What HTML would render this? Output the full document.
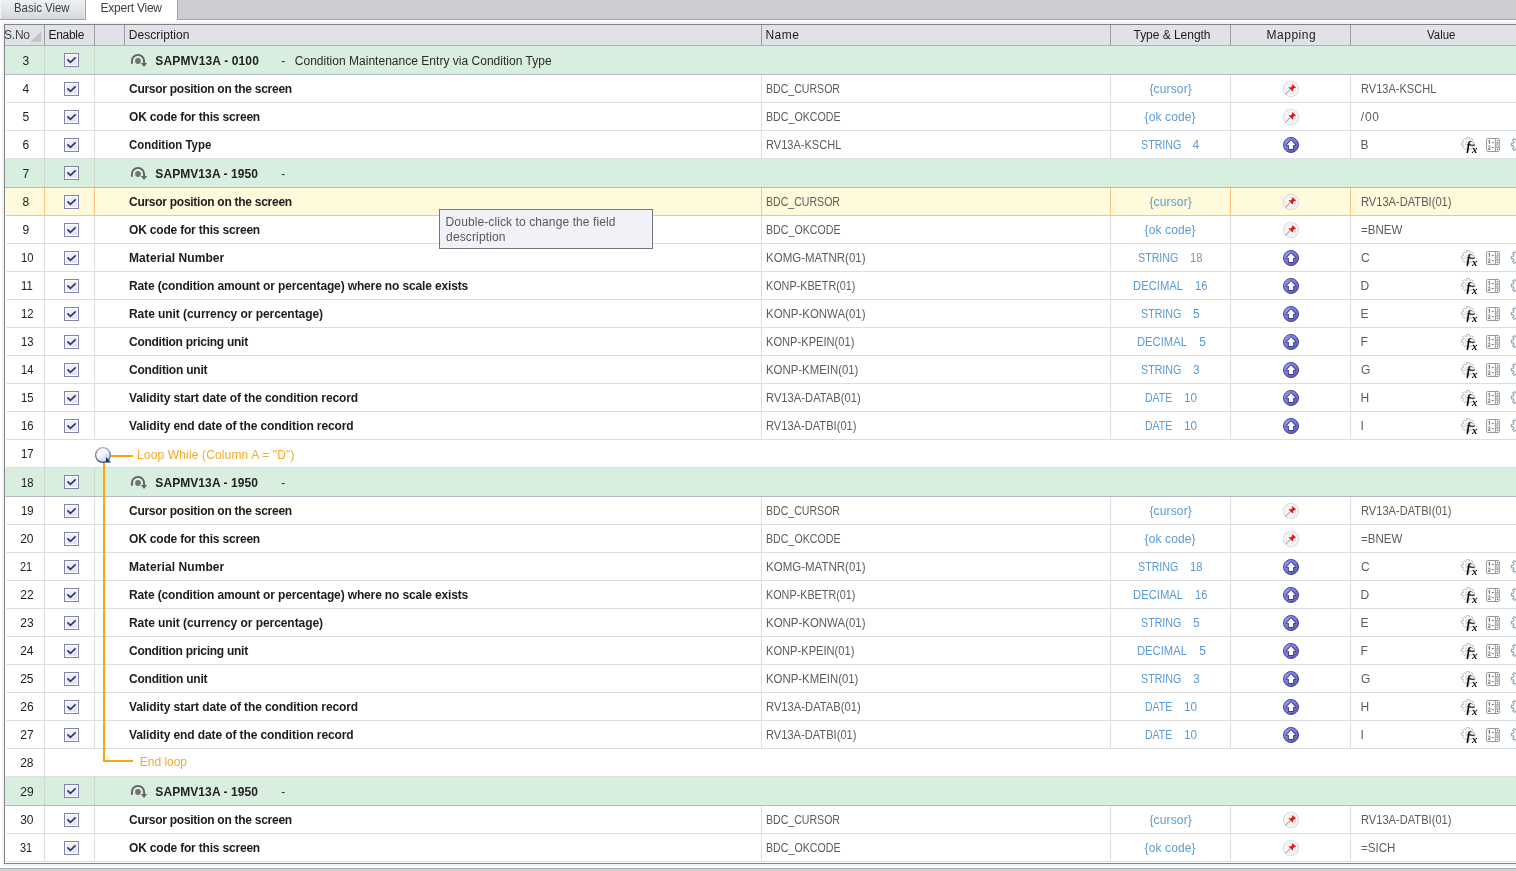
<!DOCTYPE html><html><head><meta charset="utf-8"><title>Expert View</title><style>
html,body{margin:0;padding:0}
body{width:1516px;height:871px;overflow:hidden;background:#fff;position:relative;font-family:"Liberation Sans",sans-serif;font-size:12px}
.a,.t,svg{position:absolute}
.t{white-space:pre;line-height:24px;height:24px;transform-origin:0 0}
.tab{color:#3b3f46}.hd{color:#1c1c1c}.sno{color:#444}.no{color:#222}.gb{color:#222;font-weight:bold}.gt{color:#2a2a2a}
.ds{color:#1c1c1c;font-weight:bold}.nm{color:#5c5c5c}.ty{color:#5b9bd5}.lp{color:#f6a828}.tt{color:#575757}

</style></head><body>
<div id="ly" class="a" style="left:0;top:0;width:1516px;height:871px;will-change:transform">
<svg width="0" height="0" style="left:0;top:0"><defs><linearGradient id="gcb" x1="0" y1="0" x2="1" y2="1"><stop offset="0" stop-color="#f3f4fa"/><stop offset="1" stop-color="#e0e4f2"/></linearGradient><linearGradient id="gup" x1="0.15" y1="0.1" x2="0.85" y2="0.9"><stop offset="0" stop-color="#9c9cf8"/><stop offset="0.55" stop-color="#7474c8"/><stop offset="1" stop-color="#6060b0"/></linearGradient><linearGradient id="glo" x1="0.2" y1="0.1" x2="0.8" y2="0.9"><stop offset="0" stop-color="#ffffff"/><stop offset="0.45" stop-color="#f2f6fd"/><stop offset="1" stop-color="#bccdee"/></linearGradient><linearGradient id="gls" x1="0" y1="0" x2="0" y2="1"><stop offset="0" stop-color="#a3add6"/><stop offset="1" stop-color="#34445f"/></linearGradient></defs></svg>
<div class="a" style="left:0px;top:0px;width:1516px;height:19px;background:#ccced4;"></div>
<div class="a" style="left:0px;top:19px;width:1516px;height:1px;background:#a1a5ab;"></div>
<div class="a" style="left:0px;top:0px;width:85px;height:19px;background:linear-gradient(#eef0f3,#e4e6ea 45%,#d4d7db);"></div>
<div class="a" style="left:0px;top:0px;width:1px;height:19px;background:#f4f5f7;"></div>
<div class="a" style="left:84px;top:0px;width:1px;height:19px;background:rgba(255,255,255,.35);"></div>
<div class="a" style="left:85px;top:0px;width:1px;height:20px;background:#9fa3a9;"></div>
<div class="a" style="left:86px;top:0px;width:91px;height:20px;background:#fff;"></div>
<div class="a" style="left:177px;top:0px;width:1px;height:20px;background:#9fa3a9;"></div>
<div class="a" style="left:2px;top:22px;width:1514px;height:2px;background:#f3f3f3;"></div>
<div class="a" style="left:2px;top:22px;width:2px;height:844px;background:#f3f3f3;"></div>
<div class="a" style="left:2px;top:864px;width:1514px;height:2px;background:#f3f3f3;"></div>
<div class="a" style="left:4px;top:24px;width:1512px;height:840px;background:#828282;"></div>
<div class="a" style="left:5px;top:25px;width:1511px;height:838px;background:#fff;"></div>
<div class="a" style="left:5px;top:25px;width:1511px;height:20px;background:#dfe2e7;"></div>
<div class="a" style="left:5px;top:45px;width:1511px;height:1px;background:#adb0b9;"></div>
<div class="a" style="left:44px;top:25px;width:1px;height:20px;background:#9a9da3;"></div>
<div class="a" style="left:94px;top:25px;width:1px;height:20px;background:#9a9da3;"></div>
<div class="a" style="left:124px;top:25px;width:1px;height:20px;background:#9a9da3;"></div>
<div class="a" style="left:761px;top:25px;width:1px;height:20px;background:#9a9da3;"></div>
<div class="a" style="left:1110px;top:25px;width:1px;height:20px;background:#9a9da3;"></div>
<div class="a" style="left:1230px;top:25px;width:1px;height:20px;background:#9a9da3;"></div>
<div class="a" style="left:1350px;top:25px;width:1px;height:20px;background:#9a9da3;"></div>
<svg style="left:30px;top:31px" width="12" height="11"><path d="M11.2 0.2V10.8H0.4Z" fill="#bfc3c7"/></svg>
<div class="a" style="left:0px;top:868px;width:1516px;height:1px;background:#a9aeb9;"></div>
<div class="a" style="left:0px;top:869px;width:1516px;height:2px;background:#cdd0d5;"></div>
<div class="a" style="left:5px;top:46px;width:1511px;height:28px;background:#d8efdf;"></div>
<div class="a" style="left:5px;top:74px;width:1511px;height:1px;background:#b3bac6;"></div>
<div class="a" style="left:44px;top:46px;width:1px;height:28px;background:#ccd6d3;"></div>
<div class="a" style="left:94px;top:46px;width:1px;height:28px;background:#ccd6d3;"></div>
<svg style="left:64px;top:53px" width="15" height="14"><rect x=".5" y=".5" width="14" height="13" fill="#fff" stroke="#8383a9"/><rect x="2" y="2" width="11" height="10" fill="url(#gcb)"/><path d="M3.9 6.8L6.4 9.4L11.1 4.8" fill="none" stroke="#34336a" stroke-width="1.7" stroke-linecap="round"/></svg>
<svg style="left:130px;top:52px" width="18" height="16"><path d="M1.9 11.8V9A6.1 6.1 0 0 1 14.1 9V11.4" fill="none" stroke="#5f5f61" stroke-width="1.9"/><path d="M10.8 11H17.2L14 14.9Z" fill="#666668"/><circle cx="8" cy="9" r="2.9" fill="#727274"/></svg>
<div class="a" style="left:6px;top:102px;width:1510px;height:1px;background:#dcdee1;"></div>
<div class="a" style="left:44px;top:75px;width:1px;height:28px;background:#dcdee1;"></div>
<div class="a" style="left:94px;top:75px;width:1px;height:28px;background:#dcdee1;"></div>
<div class="a" style="left:761px;top:75px;width:1px;height:28px;background:#dcdee1;"></div>
<div class="a" style="left:1110px;top:75px;width:1px;height:28px;background:#dcdee1;"></div>
<div class="a" style="left:1230px;top:75px;width:1px;height:28px;background:#dcdee1;"></div>
<div class="a" style="left:1350px;top:75px;width:1px;height:28px;background:#dcdee1;"></div>
<svg style="left:64px;top:82px" width="15" height="14"><rect x=".5" y=".5" width="14" height="13" fill="#fff" stroke="#8383a9"/><rect x="2" y="2" width="11" height="10" fill="url(#gcb)"/><path d="M3.9 6.8L6.4 9.4L11.1 4.8" fill="none" stroke="#34336a" stroke-width="1.7" stroke-linecap="round"/></svg>
<div class="a" style="left:6px;top:130px;width:1510px;height:1px;background:#dcdee1;"></div>
<div class="a" style="left:44px;top:103px;width:1px;height:28px;background:#dcdee1;"></div>
<div class="a" style="left:94px;top:103px;width:1px;height:28px;background:#dcdee1;"></div>
<div class="a" style="left:761px;top:103px;width:1px;height:28px;background:#dcdee1;"></div>
<div class="a" style="left:1110px;top:103px;width:1px;height:28px;background:#dcdee1;"></div>
<div class="a" style="left:1230px;top:103px;width:1px;height:28px;background:#dcdee1;"></div>
<div class="a" style="left:1350px;top:103px;width:1px;height:28px;background:#dcdee1;"></div>
<svg style="left:64px;top:110px" width="15" height="14"><rect x=".5" y=".5" width="14" height="13" fill="#fff" stroke="#8383a9"/><rect x="2" y="2" width="11" height="10" fill="url(#gcb)"/><path d="M3.9 6.8L6.4 9.4L11.1 4.8" fill="none" stroke="#34336a" stroke-width="1.7" stroke-linecap="round"/></svg>
<div class="a" style="left:6px;top:158px;width:1510px;height:1px;background:#dcdee1;"></div>
<div class="a" style="left:44px;top:131px;width:1px;height:28px;background:#dcdee1;"></div>
<div class="a" style="left:94px;top:131px;width:1px;height:28px;background:#dcdee1;"></div>
<div class="a" style="left:761px;top:131px;width:1px;height:28px;background:#dcdee1;"></div>
<div class="a" style="left:1110px;top:131px;width:1px;height:28px;background:#dcdee1;"></div>
<div class="a" style="left:1230px;top:131px;width:1px;height:28px;background:#dcdee1;"></div>
<div class="a" style="left:1350px;top:131px;width:1px;height:28px;background:#dcdee1;"></div>
<svg style="left:64px;top:138px" width="15" height="14"><rect x=".5" y=".5" width="14" height="13" fill="#fff" stroke="#8383a9"/><rect x="2" y="2" width="11" height="10" fill="url(#gcb)"/><path d="M3.9 6.8L6.4 9.4L11.1 4.8" fill="none" stroke="#34336a" stroke-width="1.7" stroke-linecap="round"/></svg>
<div class="a" style="left:5px;top:159px;width:1511px;height:28px;background:#d8efdf;"></div>
<div class="a" style="left:5px;top:187px;width:1511px;height:1px;background:#b3bac6;"></div>
<div class="a" style="left:44px;top:159px;width:1px;height:28px;background:#ccd6d3;"></div>
<div class="a" style="left:94px;top:159px;width:1px;height:28px;background:#ccd6d3;"></div>
<svg style="left:64px;top:166px" width="15" height="14"><rect x=".5" y=".5" width="14" height="13" fill="#fff" stroke="#8383a9"/><rect x="2" y="2" width="11" height="10" fill="url(#gcb)"/><path d="M3.9 6.8L6.4 9.4L11.1 4.8" fill="none" stroke="#34336a" stroke-width="1.7" stroke-linecap="round"/></svg>
<svg style="left:130px;top:165px" width="18" height="16"><path d="M1.9 11.8V9A6.1 6.1 0 0 1 14.1 9V11.4" fill="none" stroke="#5f5f61" stroke-width="1.9"/><path d="M10.8 11H17.2L14 14.9Z" fill="#666668"/><circle cx="8" cy="9" r="2.9" fill="#727274"/></svg>
<div class="a" style="left:5px;top:188px;width:1511px;height:27px;background:#fffadb;"></div>
<div class="a" style="left:6px;top:215px;width:1510px;height:1px;background:#f6c47e;"></div>
<div class="a" style="left:44px;top:188px;width:1px;height:28px;background:#f6c47e;"></div>
<div class="a" style="left:94px;top:188px;width:1px;height:28px;background:#f6c47e;"></div>
<div class="a" style="left:761px;top:188px;width:1px;height:28px;background:#f6c47e;"></div>
<div class="a" style="left:1110px;top:188px;width:1px;height:28px;background:#f6c47e;"></div>
<div class="a" style="left:1230px;top:188px;width:1px;height:28px;background:#f6c47e;"></div>
<div class="a" style="left:1350px;top:188px;width:1px;height:28px;background:#f6c47e;"></div>
<svg style="left:64px;top:195px" width="15" height="14"><rect x=".5" y=".5" width="14" height="13" fill="#fff" stroke="#8383a9"/><rect x="2" y="2" width="11" height="10" fill="url(#gcb)"/><path d="M3.9 6.8L6.4 9.4L11.1 4.8" fill="none" stroke="#34336a" stroke-width="1.7" stroke-linecap="round"/></svg>
<div class="a" style="left:6px;top:243px;width:1510px;height:1px;background:#dcdee1;"></div>
<div class="a" style="left:44px;top:216px;width:1px;height:28px;background:#dcdee1;"></div>
<div class="a" style="left:94px;top:216px;width:1px;height:28px;background:#dcdee1;"></div>
<div class="a" style="left:761px;top:216px;width:1px;height:28px;background:#dcdee1;"></div>
<div class="a" style="left:1110px;top:216px;width:1px;height:28px;background:#dcdee1;"></div>
<div class="a" style="left:1230px;top:216px;width:1px;height:28px;background:#dcdee1;"></div>
<div class="a" style="left:1350px;top:216px;width:1px;height:28px;background:#dcdee1;"></div>
<svg style="left:64px;top:223px" width="15" height="14"><rect x=".5" y=".5" width="14" height="13" fill="#fff" stroke="#8383a9"/><rect x="2" y="2" width="11" height="10" fill="url(#gcb)"/><path d="M3.9 6.8L6.4 9.4L11.1 4.8" fill="none" stroke="#34336a" stroke-width="1.7" stroke-linecap="round"/></svg>
<div class="a" style="left:6px;top:271px;width:1510px;height:1px;background:#dcdee1;"></div>
<div class="a" style="left:44px;top:244px;width:1px;height:28px;background:#dcdee1;"></div>
<div class="a" style="left:94px;top:244px;width:1px;height:28px;background:#dcdee1;"></div>
<div class="a" style="left:761px;top:244px;width:1px;height:28px;background:#dcdee1;"></div>
<div class="a" style="left:1110px;top:244px;width:1px;height:28px;background:#dcdee1;"></div>
<div class="a" style="left:1230px;top:244px;width:1px;height:28px;background:#dcdee1;"></div>
<div class="a" style="left:1350px;top:244px;width:1px;height:28px;background:#dcdee1;"></div>
<svg style="left:64px;top:251px" width="15" height="14"><rect x=".5" y=".5" width="14" height="13" fill="#fff" stroke="#8383a9"/><rect x="2" y="2" width="11" height="10" fill="url(#gcb)"/><path d="M3.9 6.8L6.4 9.4L11.1 4.8" fill="none" stroke="#34336a" stroke-width="1.7" stroke-linecap="round"/></svg>
<div class="a" style="left:6px;top:299px;width:1510px;height:1px;background:#dcdee1;"></div>
<div class="a" style="left:44px;top:272px;width:1px;height:28px;background:#dcdee1;"></div>
<div class="a" style="left:94px;top:272px;width:1px;height:28px;background:#dcdee1;"></div>
<div class="a" style="left:761px;top:272px;width:1px;height:28px;background:#dcdee1;"></div>
<div class="a" style="left:1110px;top:272px;width:1px;height:28px;background:#dcdee1;"></div>
<div class="a" style="left:1230px;top:272px;width:1px;height:28px;background:#dcdee1;"></div>
<div class="a" style="left:1350px;top:272px;width:1px;height:28px;background:#dcdee1;"></div>
<svg style="left:64px;top:279px" width="15" height="14"><rect x=".5" y=".5" width="14" height="13" fill="#fff" stroke="#8383a9"/><rect x="2" y="2" width="11" height="10" fill="url(#gcb)"/><path d="M3.9 6.8L6.4 9.4L11.1 4.8" fill="none" stroke="#34336a" stroke-width="1.7" stroke-linecap="round"/></svg>
<div class="a" style="left:6px;top:327px;width:1510px;height:1px;background:#dcdee1;"></div>
<div class="a" style="left:44px;top:300px;width:1px;height:28px;background:#dcdee1;"></div>
<div class="a" style="left:94px;top:300px;width:1px;height:28px;background:#dcdee1;"></div>
<div class="a" style="left:761px;top:300px;width:1px;height:28px;background:#dcdee1;"></div>
<div class="a" style="left:1110px;top:300px;width:1px;height:28px;background:#dcdee1;"></div>
<div class="a" style="left:1230px;top:300px;width:1px;height:28px;background:#dcdee1;"></div>
<div class="a" style="left:1350px;top:300px;width:1px;height:28px;background:#dcdee1;"></div>
<svg style="left:64px;top:307px" width="15" height="14"><rect x=".5" y=".5" width="14" height="13" fill="#fff" stroke="#8383a9"/><rect x="2" y="2" width="11" height="10" fill="url(#gcb)"/><path d="M3.9 6.8L6.4 9.4L11.1 4.8" fill="none" stroke="#34336a" stroke-width="1.7" stroke-linecap="round"/></svg>
<div class="a" style="left:6px;top:355px;width:1510px;height:1px;background:#dcdee1;"></div>
<div class="a" style="left:44px;top:328px;width:1px;height:28px;background:#dcdee1;"></div>
<div class="a" style="left:94px;top:328px;width:1px;height:28px;background:#dcdee1;"></div>
<div class="a" style="left:761px;top:328px;width:1px;height:28px;background:#dcdee1;"></div>
<div class="a" style="left:1110px;top:328px;width:1px;height:28px;background:#dcdee1;"></div>
<div class="a" style="left:1230px;top:328px;width:1px;height:28px;background:#dcdee1;"></div>
<div class="a" style="left:1350px;top:328px;width:1px;height:28px;background:#dcdee1;"></div>
<svg style="left:64px;top:335px" width="15" height="14"><rect x=".5" y=".5" width="14" height="13" fill="#fff" stroke="#8383a9"/><rect x="2" y="2" width="11" height="10" fill="url(#gcb)"/><path d="M3.9 6.8L6.4 9.4L11.1 4.8" fill="none" stroke="#34336a" stroke-width="1.7" stroke-linecap="round"/></svg>
<div class="a" style="left:6px;top:383px;width:1510px;height:1px;background:#dcdee1;"></div>
<div class="a" style="left:44px;top:356px;width:1px;height:28px;background:#dcdee1;"></div>
<div class="a" style="left:94px;top:356px;width:1px;height:28px;background:#dcdee1;"></div>
<div class="a" style="left:761px;top:356px;width:1px;height:28px;background:#dcdee1;"></div>
<div class="a" style="left:1110px;top:356px;width:1px;height:28px;background:#dcdee1;"></div>
<div class="a" style="left:1230px;top:356px;width:1px;height:28px;background:#dcdee1;"></div>
<div class="a" style="left:1350px;top:356px;width:1px;height:28px;background:#dcdee1;"></div>
<svg style="left:64px;top:363px" width="15" height="14"><rect x=".5" y=".5" width="14" height="13" fill="#fff" stroke="#8383a9"/><rect x="2" y="2" width="11" height="10" fill="url(#gcb)"/><path d="M3.9 6.8L6.4 9.4L11.1 4.8" fill="none" stroke="#34336a" stroke-width="1.7" stroke-linecap="round"/></svg>
<div class="a" style="left:6px;top:411px;width:1510px;height:1px;background:#dcdee1;"></div>
<div class="a" style="left:44px;top:384px;width:1px;height:28px;background:#dcdee1;"></div>
<div class="a" style="left:94px;top:384px;width:1px;height:28px;background:#dcdee1;"></div>
<div class="a" style="left:761px;top:384px;width:1px;height:28px;background:#dcdee1;"></div>
<div class="a" style="left:1110px;top:384px;width:1px;height:28px;background:#dcdee1;"></div>
<div class="a" style="left:1230px;top:384px;width:1px;height:28px;background:#dcdee1;"></div>
<div class="a" style="left:1350px;top:384px;width:1px;height:28px;background:#dcdee1;"></div>
<svg style="left:64px;top:391px" width="15" height="14"><rect x=".5" y=".5" width="14" height="13" fill="#fff" stroke="#8383a9"/><rect x="2" y="2" width="11" height="10" fill="url(#gcb)"/><path d="M3.9 6.8L6.4 9.4L11.1 4.8" fill="none" stroke="#34336a" stroke-width="1.7" stroke-linecap="round"/></svg>
<div class="a" style="left:6px;top:439px;width:1510px;height:1px;background:#dcdee1;"></div>
<div class="a" style="left:44px;top:412px;width:1px;height:28px;background:#dcdee1;"></div>
<div class="a" style="left:94px;top:412px;width:1px;height:28px;background:#dcdee1;"></div>
<div class="a" style="left:761px;top:412px;width:1px;height:28px;background:#dcdee1;"></div>
<div class="a" style="left:1110px;top:412px;width:1px;height:28px;background:#dcdee1;"></div>
<div class="a" style="left:1230px;top:412px;width:1px;height:28px;background:#dcdee1;"></div>
<div class="a" style="left:1350px;top:412px;width:1px;height:28px;background:#dcdee1;"></div>
<svg style="left:64px;top:419px" width="15" height="14"><rect x=".5" y=".5" width="14" height="13" fill="#fff" stroke="#8383a9"/><rect x="2" y="2" width="11" height="10" fill="url(#gcb)"/><path d="M3.9 6.8L6.4 9.4L11.1 4.8" fill="none" stroke="#34336a" stroke-width="1.7" stroke-linecap="round"/></svg>
<div class="a" style="left:6px;top:467px;width:1510px;height:1px;background:#dcdee1;"></div>
<div class="a" style="left:44px;top:440px;width:1px;height:28px;background:#dcdee1;"></div>
<div class="a" style="left:5px;top:468px;width:1511px;height:28px;background:#d8efdf;"></div>
<div class="a" style="left:5px;top:496px;width:1511px;height:1px;background:#b3bac6;"></div>
<div class="a" style="left:44px;top:468px;width:1px;height:28px;background:#ccd6d3;"></div>
<div class="a" style="left:94px;top:468px;width:1px;height:28px;background:#ccd6d3;"></div>
<svg style="left:64px;top:475px" width="15" height="14"><rect x=".5" y=".5" width="14" height="13" fill="#fff" stroke="#8383a9"/><rect x="2" y="2" width="11" height="10" fill="url(#gcb)"/><path d="M3.9 6.8L6.4 9.4L11.1 4.8" fill="none" stroke="#34336a" stroke-width="1.7" stroke-linecap="round"/></svg>
<svg style="left:130px;top:474px" width="18" height="16"><path d="M1.9 11.8V9A6.1 6.1 0 0 1 14.1 9V11.4" fill="none" stroke="#5f5f61" stroke-width="1.9"/><path d="M10.8 11H17.2L14 14.9Z" fill="#666668"/><circle cx="8" cy="9" r="2.9" fill="#727274"/></svg>
<div class="a" style="left:6px;top:524px;width:1510px;height:1px;background:#dcdee1;"></div>
<div class="a" style="left:44px;top:497px;width:1px;height:28px;background:#dcdee1;"></div>
<div class="a" style="left:94px;top:497px;width:1px;height:28px;background:#dcdee1;"></div>
<div class="a" style="left:761px;top:497px;width:1px;height:28px;background:#dcdee1;"></div>
<div class="a" style="left:1110px;top:497px;width:1px;height:28px;background:#dcdee1;"></div>
<div class="a" style="left:1230px;top:497px;width:1px;height:28px;background:#dcdee1;"></div>
<div class="a" style="left:1350px;top:497px;width:1px;height:28px;background:#dcdee1;"></div>
<svg style="left:64px;top:504px" width="15" height="14"><rect x=".5" y=".5" width="14" height="13" fill="#fff" stroke="#8383a9"/><rect x="2" y="2" width="11" height="10" fill="url(#gcb)"/><path d="M3.9 6.8L6.4 9.4L11.1 4.8" fill="none" stroke="#34336a" stroke-width="1.7" stroke-linecap="round"/></svg>
<div class="a" style="left:6px;top:552px;width:1510px;height:1px;background:#dcdee1;"></div>
<div class="a" style="left:44px;top:525px;width:1px;height:28px;background:#dcdee1;"></div>
<div class="a" style="left:94px;top:525px;width:1px;height:28px;background:#dcdee1;"></div>
<div class="a" style="left:761px;top:525px;width:1px;height:28px;background:#dcdee1;"></div>
<div class="a" style="left:1110px;top:525px;width:1px;height:28px;background:#dcdee1;"></div>
<div class="a" style="left:1230px;top:525px;width:1px;height:28px;background:#dcdee1;"></div>
<div class="a" style="left:1350px;top:525px;width:1px;height:28px;background:#dcdee1;"></div>
<svg style="left:64px;top:532px" width="15" height="14"><rect x=".5" y=".5" width="14" height="13" fill="#fff" stroke="#8383a9"/><rect x="2" y="2" width="11" height="10" fill="url(#gcb)"/><path d="M3.9 6.8L6.4 9.4L11.1 4.8" fill="none" stroke="#34336a" stroke-width="1.7" stroke-linecap="round"/></svg>
<div class="a" style="left:6px;top:580px;width:1510px;height:1px;background:#dcdee1;"></div>
<div class="a" style="left:44px;top:553px;width:1px;height:28px;background:#dcdee1;"></div>
<div class="a" style="left:94px;top:553px;width:1px;height:28px;background:#dcdee1;"></div>
<div class="a" style="left:761px;top:553px;width:1px;height:28px;background:#dcdee1;"></div>
<div class="a" style="left:1110px;top:553px;width:1px;height:28px;background:#dcdee1;"></div>
<div class="a" style="left:1230px;top:553px;width:1px;height:28px;background:#dcdee1;"></div>
<div class="a" style="left:1350px;top:553px;width:1px;height:28px;background:#dcdee1;"></div>
<svg style="left:64px;top:560px" width="15" height="14"><rect x=".5" y=".5" width="14" height="13" fill="#fff" stroke="#8383a9"/><rect x="2" y="2" width="11" height="10" fill="url(#gcb)"/><path d="M3.9 6.8L6.4 9.4L11.1 4.8" fill="none" stroke="#34336a" stroke-width="1.7" stroke-linecap="round"/></svg>
<div class="a" style="left:6px;top:608px;width:1510px;height:1px;background:#dcdee1;"></div>
<div class="a" style="left:44px;top:581px;width:1px;height:28px;background:#dcdee1;"></div>
<div class="a" style="left:94px;top:581px;width:1px;height:28px;background:#dcdee1;"></div>
<div class="a" style="left:761px;top:581px;width:1px;height:28px;background:#dcdee1;"></div>
<div class="a" style="left:1110px;top:581px;width:1px;height:28px;background:#dcdee1;"></div>
<div class="a" style="left:1230px;top:581px;width:1px;height:28px;background:#dcdee1;"></div>
<div class="a" style="left:1350px;top:581px;width:1px;height:28px;background:#dcdee1;"></div>
<svg style="left:64px;top:588px" width="15" height="14"><rect x=".5" y=".5" width="14" height="13" fill="#fff" stroke="#8383a9"/><rect x="2" y="2" width="11" height="10" fill="url(#gcb)"/><path d="M3.9 6.8L6.4 9.4L11.1 4.8" fill="none" stroke="#34336a" stroke-width="1.7" stroke-linecap="round"/></svg>
<div class="a" style="left:6px;top:636px;width:1510px;height:1px;background:#dcdee1;"></div>
<div class="a" style="left:44px;top:609px;width:1px;height:28px;background:#dcdee1;"></div>
<div class="a" style="left:94px;top:609px;width:1px;height:28px;background:#dcdee1;"></div>
<div class="a" style="left:761px;top:609px;width:1px;height:28px;background:#dcdee1;"></div>
<div class="a" style="left:1110px;top:609px;width:1px;height:28px;background:#dcdee1;"></div>
<div class="a" style="left:1230px;top:609px;width:1px;height:28px;background:#dcdee1;"></div>
<div class="a" style="left:1350px;top:609px;width:1px;height:28px;background:#dcdee1;"></div>
<svg style="left:64px;top:616px" width="15" height="14"><rect x=".5" y=".5" width="14" height="13" fill="#fff" stroke="#8383a9"/><rect x="2" y="2" width="11" height="10" fill="url(#gcb)"/><path d="M3.9 6.8L6.4 9.4L11.1 4.8" fill="none" stroke="#34336a" stroke-width="1.7" stroke-linecap="round"/></svg>
<div class="a" style="left:6px;top:664px;width:1510px;height:1px;background:#dcdee1;"></div>
<div class="a" style="left:44px;top:637px;width:1px;height:28px;background:#dcdee1;"></div>
<div class="a" style="left:94px;top:637px;width:1px;height:28px;background:#dcdee1;"></div>
<div class="a" style="left:761px;top:637px;width:1px;height:28px;background:#dcdee1;"></div>
<div class="a" style="left:1110px;top:637px;width:1px;height:28px;background:#dcdee1;"></div>
<div class="a" style="left:1230px;top:637px;width:1px;height:28px;background:#dcdee1;"></div>
<div class="a" style="left:1350px;top:637px;width:1px;height:28px;background:#dcdee1;"></div>
<svg style="left:64px;top:644px" width="15" height="14"><rect x=".5" y=".5" width="14" height="13" fill="#fff" stroke="#8383a9"/><rect x="2" y="2" width="11" height="10" fill="url(#gcb)"/><path d="M3.9 6.8L6.4 9.4L11.1 4.8" fill="none" stroke="#34336a" stroke-width="1.7" stroke-linecap="round"/></svg>
<div class="a" style="left:6px;top:692px;width:1510px;height:1px;background:#dcdee1;"></div>
<div class="a" style="left:44px;top:665px;width:1px;height:28px;background:#dcdee1;"></div>
<div class="a" style="left:94px;top:665px;width:1px;height:28px;background:#dcdee1;"></div>
<div class="a" style="left:761px;top:665px;width:1px;height:28px;background:#dcdee1;"></div>
<div class="a" style="left:1110px;top:665px;width:1px;height:28px;background:#dcdee1;"></div>
<div class="a" style="left:1230px;top:665px;width:1px;height:28px;background:#dcdee1;"></div>
<div class="a" style="left:1350px;top:665px;width:1px;height:28px;background:#dcdee1;"></div>
<svg style="left:64px;top:672px" width="15" height="14"><rect x=".5" y=".5" width="14" height="13" fill="#fff" stroke="#8383a9"/><rect x="2" y="2" width="11" height="10" fill="url(#gcb)"/><path d="M3.9 6.8L6.4 9.4L11.1 4.8" fill="none" stroke="#34336a" stroke-width="1.7" stroke-linecap="round"/></svg>
<div class="a" style="left:6px;top:720px;width:1510px;height:1px;background:#dcdee1;"></div>
<div class="a" style="left:44px;top:693px;width:1px;height:28px;background:#dcdee1;"></div>
<div class="a" style="left:94px;top:693px;width:1px;height:28px;background:#dcdee1;"></div>
<div class="a" style="left:761px;top:693px;width:1px;height:28px;background:#dcdee1;"></div>
<div class="a" style="left:1110px;top:693px;width:1px;height:28px;background:#dcdee1;"></div>
<div class="a" style="left:1230px;top:693px;width:1px;height:28px;background:#dcdee1;"></div>
<div class="a" style="left:1350px;top:693px;width:1px;height:28px;background:#dcdee1;"></div>
<svg style="left:64px;top:700px" width="15" height="14"><rect x=".5" y=".5" width="14" height="13" fill="#fff" stroke="#8383a9"/><rect x="2" y="2" width="11" height="10" fill="url(#gcb)"/><path d="M3.9 6.8L6.4 9.4L11.1 4.8" fill="none" stroke="#34336a" stroke-width="1.7" stroke-linecap="round"/></svg>
<div class="a" style="left:6px;top:748px;width:1510px;height:1px;background:#dcdee1;"></div>
<div class="a" style="left:44px;top:721px;width:1px;height:28px;background:#dcdee1;"></div>
<div class="a" style="left:94px;top:721px;width:1px;height:28px;background:#dcdee1;"></div>
<div class="a" style="left:761px;top:721px;width:1px;height:28px;background:#dcdee1;"></div>
<div class="a" style="left:1110px;top:721px;width:1px;height:28px;background:#dcdee1;"></div>
<div class="a" style="left:1230px;top:721px;width:1px;height:28px;background:#dcdee1;"></div>
<div class="a" style="left:1350px;top:721px;width:1px;height:28px;background:#dcdee1;"></div>
<svg style="left:64px;top:728px" width="15" height="14"><rect x=".5" y=".5" width="14" height="13" fill="#fff" stroke="#8383a9"/><rect x="2" y="2" width="11" height="10" fill="url(#gcb)"/><path d="M3.9 6.8L6.4 9.4L11.1 4.8" fill="none" stroke="#34336a" stroke-width="1.7" stroke-linecap="round"/></svg>
<div class="a" style="left:6px;top:776px;width:1510px;height:1px;background:#dcdee1;"></div>
<div class="a" style="left:44px;top:749px;width:1px;height:28px;background:#dcdee1;"></div>
<div class="a" style="left:5px;top:777px;width:1511px;height:28px;background:#d8efdf;"></div>
<div class="a" style="left:5px;top:805px;width:1511px;height:1px;background:#b3bac6;"></div>
<div class="a" style="left:44px;top:777px;width:1px;height:28px;background:#ccd6d3;"></div>
<div class="a" style="left:94px;top:777px;width:1px;height:28px;background:#ccd6d3;"></div>
<svg style="left:64px;top:784px" width="15" height="14"><rect x=".5" y=".5" width="14" height="13" fill="#fff" stroke="#8383a9"/><rect x="2" y="2" width="11" height="10" fill="url(#gcb)"/><path d="M3.9 6.8L6.4 9.4L11.1 4.8" fill="none" stroke="#34336a" stroke-width="1.7" stroke-linecap="round"/></svg>
<svg style="left:130px;top:783px" width="18" height="16"><path d="M1.9 11.8V9A6.1 6.1 0 0 1 14.1 9V11.4" fill="none" stroke="#5f5f61" stroke-width="1.9"/><path d="M10.8 11H17.2L14 14.9Z" fill="#666668"/><circle cx="8" cy="9" r="2.9" fill="#727274"/></svg>
<div class="a" style="left:6px;top:833px;width:1510px;height:1px;background:#dcdee1;"></div>
<div class="a" style="left:44px;top:806px;width:1px;height:28px;background:#dcdee1;"></div>
<div class="a" style="left:94px;top:806px;width:1px;height:28px;background:#dcdee1;"></div>
<div class="a" style="left:761px;top:806px;width:1px;height:28px;background:#dcdee1;"></div>
<div class="a" style="left:1110px;top:806px;width:1px;height:28px;background:#dcdee1;"></div>
<div class="a" style="left:1230px;top:806px;width:1px;height:28px;background:#dcdee1;"></div>
<div class="a" style="left:1350px;top:806px;width:1px;height:28px;background:#dcdee1;"></div>
<svg style="left:64px;top:813px" width="15" height="14"><rect x=".5" y=".5" width="14" height="13" fill="#fff" stroke="#8383a9"/><rect x="2" y="2" width="11" height="10" fill="url(#gcb)"/><path d="M3.9 6.8L6.4 9.4L11.1 4.8" fill="none" stroke="#34336a" stroke-width="1.7" stroke-linecap="round"/></svg>
<div class="a" style="left:6px;top:861px;width:1510px;height:1px;background:#dcdee1;"></div>
<div class="a" style="left:44px;top:834px;width:1px;height:28px;background:#dcdee1;"></div>
<div class="a" style="left:94px;top:834px;width:1px;height:28px;background:#dcdee1;"></div>
<div class="a" style="left:761px;top:834px;width:1px;height:28px;background:#dcdee1;"></div>
<div class="a" style="left:1110px;top:834px;width:1px;height:28px;background:#dcdee1;"></div>
<div class="a" style="left:1230px;top:834px;width:1px;height:28px;background:#dcdee1;"></div>
<div class="a" style="left:1350px;top:834px;width:1px;height:28px;background:#dcdee1;"></div>
<svg style="left:64px;top:841px" width="15" height="14"><rect x=".5" y=".5" width="14" height="13" fill="#fff" stroke="#8383a9"/><rect x="2" y="2" width="11" height="10" fill="url(#gcb)"/><path d="M3.9 6.8L6.4 9.4L11.1 4.8" fill="none" stroke="#34336a" stroke-width="1.7" stroke-linecap="round"/></svg>
<svg style="left:1282px;top:80px" width="18" height="18"><circle cx="9" cy="9" r="7.5" fill="#fff" stroke="#d8d9dd" stroke-width="1.2"/><circle cx="9" cy="9" r="5" fill="none" stroke="#efeff0" stroke-width="1.8"/><path d="M3.4 14.4L8.4 9.5" stroke="#b0b0b0" stroke-width="1.1"/><g transform="translate(10.2 8) scale(.88) translate(-10 -8)"><path d="M10.4 3.8L14.2 7.5L13.5 8.1L12.4 7.9L10.9 9.6L11.2 11.5L10.5 12.1L5.8 7.5L6.5 6.8L8.4 7.1L10 5.5L9.8 4.4Z" fill="#f40c0c"/><path d="M7 7.2L8.8 7.4L10.4 5.7" stroke="#ff7d7d" stroke-width=".7" fill="none"/></g></svg>
<svg style="left:1282px;top:108px" width="18" height="18"><circle cx="9" cy="9" r="7.5" fill="#fff" stroke="#d8d9dd" stroke-width="1.2"/><circle cx="9" cy="9" r="5" fill="none" stroke="#efeff0" stroke-width="1.8"/><path d="M3.4 14.4L8.4 9.5" stroke="#b0b0b0" stroke-width="1.1"/><g transform="translate(10.2 8) scale(.88) translate(-10 -8)"><path d="M10.4 3.8L14.2 7.5L13.5 8.1L12.4 7.9L10.9 9.6L11.2 11.5L10.5 12.1L5.8 7.5L6.5 6.8L8.4 7.1L10 5.5L9.8 4.4Z" fill="#f40c0c"/><path d="M7 7.2L8.8 7.4L10.4 5.7" stroke="#ff7d7d" stroke-width=".7" fill="none"/></g></svg>
<svg style="left:1282px;top:136px" width="18" height="18"><circle cx="9" cy="9" r="7.5" fill="url(#gup)" stroke="#3f3fa0" stroke-width="1"/><path d="M9 4.3L13.3 8.9H11.1V13H6.9V8.9H4.7Z" fill="#fff" stroke="#3a3a9c" stroke-width="1.8" stroke-linejoin="round" paint-order="stroke"/></svg>
<svg style="left:1460px;top:136px" width="20" height="20"><path d="M12.72 6.67L14.50 6.84L14.50 9.16L12.72 9.33L12.28 10.39L13.41 11.78L11.78 13.41L10.39 12.28L9.33 12.72L9.16 14.50L6.84 14.50L6.67 12.72L5.61 12.28L4.22 13.41L2.59 11.78L3.72 10.39L3.28 9.33L1.50 9.16L1.50 6.84L3.28 6.67L3.72 5.61L2.59 4.22L4.22 2.59L5.61 3.72L6.67 3.28L6.84 1.50L9.16 1.50L9.33 3.28L10.39 3.72L11.78 2.59L13.41 4.22L12.28 5.61Z" fill="none" stroke="#adadad" stroke-width="1" stroke-linejoin="round" stroke-dasharray="2.2 .5"/><circle cx="8" cy="8" r="2.4" fill="none" stroke="#d2d2d2" stroke-width="1"/><text x="6.4" y="14.4" font-family="Liberation Serif,serif" font-weight="bold" font-style="italic" font-size="12" fill="#000">f</text><path d="M9.6 9.2H14.6" stroke="#000" stroke-width="1"/><text x="12" y="17" font-family="Liberation Serif,serif" font-weight="bold" font-style="italic" font-size="10.5" fill="#000">x</text><circle cx="16.4" cy="12.4" r=".6" fill="#111"/></svg>
<svg style="left:1486px;top:138px" width="15" height="15"><rect x=".6" y=".5" width="12.7" height="13" rx="1.2" fill="#fff" stroke="#94979c" stroke-width="1"/><path d="M9.4 .6V13.4" stroke="#94979c" stroke-width="1"/><rect x="9.9" y="4.8" width="3" height="4.4" fill="#c8cbcf"/><path d="M9.6 4.6H13.2M9.6 9.4H13.2" stroke="#94979c" stroke-width=".7"/><circle cx="11.5" cy="2.7" r=".65" fill="#555"/><circle cx="11.5" cy="11.4" r=".65" fill="#555"/><path d="M2.4 3L3.4 2.2V6M5.8 4.6H7.8M2.2 8.5C2.8 7.5 4.4 7.8 4 9.1L2.2 11.3H4.6M5.8 9.6H7.8" fill="none" stroke="#6c6f74" stroke-width="1"/></svg>
<svg style="left:1509px;top:137px" width="17" height="15"><path d="M14.53 6.17L16.60 6.31L16.60 8.69L14.53 8.83L14.00 10.11L15.36 11.68L13.68 13.36L12.11 12.00L10.83 12.53L10.69 14.60L8.31 14.60L8.17 12.53L6.89 12.00L5.32 13.36L3.64 11.68L5.00 10.11L4.47 8.83L2.40 8.69L2.40 6.31L4.47 6.17L5.00 4.89L3.64 3.32L5.32 1.64L6.89 3.00L8.17 2.47L8.31 0.40L10.69 0.40L10.83 2.47L12.11 3.00L13.68 1.64L15.36 3.32L14.00 4.89Z" fill="none" stroke="#86a5bf" stroke-width="1.1"/></svg>
<svg style="left:1282px;top:193px" width="18" height="18"><circle cx="9" cy="9" r="7.5" fill="#fff" stroke="#d8d9dd" stroke-width="1.2"/><circle cx="9" cy="9" r="5" fill="none" stroke="#efeff0" stroke-width="1.8"/><path d="M3.4 14.4L8.4 9.5" stroke="#b0b0b0" stroke-width="1.1"/><g transform="translate(10.2 8) scale(.88) translate(-10 -8)"><path d="M10.4 3.8L14.2 7.5L13.5 8.1L12.4 7.9L10.9 9.6L11.2 11.5L10.5 12.1L5.8 7.5L6.5 6.8L8.4 7.1L10 5.5L9.8 4.4Z" fill="#f40c0c"/><path d="M7 7.2L8.8 7.4L10.4 5.7" stroke="#ff7d7d" stroke-width=".7" fill="none"/></g></svg>
<svg style="left:1282px;top:221px" width="18" height="18"><circle cx="9" cy="9" r="7.5" fill="#fff" stroke="#d8d9dd" stroke-width="1.2"/><circle cx="9" cy="9" r="5" fill="none" stroke="#efeff0" stroke-width="1.8"/><path d="M3.4 14.4L8.4 9.5" stroke="#b0b0b0" stroke-width="1.1"/><g transform="translate(10.2 8) scale(.88) translate(-10 -8)"><path d="M10.4 3.8L14.2 7.5L13.5 8.1L12.4 7.9L10.9 9.6L11.2 11.5L10.5 12.1L5.8 7.5L6.5 6.8L8.4 7.1L10 5.5L9.8 4.4Z" fill="#f40c0c"/><path d="M7 7.2L8.8 7.4L10.4 5.7" stroke="#ff7d7d" stroke-width=".7" fill="none"/></g></svg>
<svg style="left:1282px;top:249px" width="18" height="18"><circle cx="9" cy="9" r="7.5" fill="url(#gup)" stroke="#3f3fa0" stroke-width="1"/><path d="M9 4.3L13.3 8.9H11.1V13H6.9V8.9H4.7Z" fill="#fff" stroke="#3a3a9c" stroke-width="1.8" stroke-linejoin="round" paint-order="stroke"/></svg>
<svg style="left:1460px;top:249px" width="20" height="20"><path d="M12.72 6.67L14.50 6.84L14.50 9.16L12.72 9.33L12.28 10.39L13.41 11.78L11.78 13.41L10.39 12.28L9.33 12.72L9.16 14.50L6.84 14.50L6.67 12.72L5.61 12.28L4.22 13.41L2.59 11.78L3.72 10.39L3.28 9.33L1.50 9.16L1.50 6.84L3.28 6.67L3.72 5.61L2.59 4.22L4.22 2.59L5.61 3.72L6.67 3.28L6.84 1.50L9.16 1.50L9.33 3.28L10.39 3.72L11.78 2.59L13.41 4.22L12.28 5.61Z" fill="none" stroke="#adadad" stroke-width="1" stroke-linejoin="round" stroke-dasharray="2.2 .5"/><circle cx="8" cy="8" r="2.4" fill="none" stroke="#d2d2d2" stroke-width="1"/><text x="6.4" y="14.4" font-family="Liberation Serif,serif" font-weight="bold" font-style="italic" font-size="12" fill="#000">f</text><path d="M9.6 9.2H14.6" stroke="#000" stroke-width="1"/><text x="12" y="17" font-family="Liberation Serif,serif" font-weight="bold" font-style="italic" font-size="10.5" fill="#000">x</text><circle cx="16.4" cy="12.4" r=".6" fill="#111"/></svg>
<svg style="left:1486px;top:251px" width="15" height="15"><rect x=".6" y=".5" width="12.7" height="13" rx="1.2" fill="#fff" stroke="#94979c" stroke-width="1"/><path d="M9.4 .6V13.4" stroke="#94979c" stroke-width="1"/><rect x="9.9" y="4.8" width="3" height="4.4" fill="#c8cbcf"/><path d="M9.6 4.6H13.2M9.6 9.4H13.2" stroke="#94979c" stroke-width=".7"/><circle cx="11.5" cy="2.7" r=".65" fill="#555"/><circle cx="11.5" cy="11.4" r=".65" fill="#555"/><path d="M2.4 3L3.4 2.2V6M5.8 4.6H7.8M2.2 8.5C2.8 7.5 4.4 7.8 4 9.1L2.2 11.3H4.6M5.8 9.6H7.8" fill="none" stroke="#6c6f74" stroke-width="1"/></svg>
<svg style="left:1509px;top:250px" width="17" height="15"><path d="M14.53 6.17L16.60 6.31L16.60 8.69L14.53 8.83L14.00 10.11L15.36 11.68L13.68 13.36L12.11 12.00L10.83 12.53L10.69 14.60L8.31 14.60L8.17 12.53L6.89 12.00L5.32 13.36L3.64 11.68L5.00 10.11L4.47 8.83L2.40 8.69L2.40 6.31L4.47 6.17L5.00 4.89L3.64 3.32L5.32 1.64L6.89 3.00L8.17 2.47L8.31 0.40L10.69 0.40L10.83 2.47L12.11 3.00L13.68 1.64L15.36 3.32L14.00 4.89Z" fill="none" stroke="#86a5bf" stroke-width="1.1"/></svg>
<svg style="left:1282px;top:277px" width="18" height="18"><circle cx="9" cy="9" r="7.5" fill="url(#gup)" stroke="#3f3fa0" stroke-width="1"/><path d="M9 4.3L13.3 8.9H11.1V13H6.9V8.9H4.7Z" fill="#fff" stroke="#3a3a9c" stroke-width="1.8" stroke-linejoin="round" paint-order="stroke"/></svg>
<svg style="left:1460px;top:277px" width="20" height="20"><path d="M12.72 6.67L14.50 6.84L14.50 9.16L12.72 9.33L12.28 10.39L13.41 11.78L11.78 13.41L10.39 12.28L9.33 12.72L9.16 14.50L6.84 14.50L6.67 12.72L5.61 12.28L4.22 13.41L2.59 11.78L3.72 10.39L3.28 9.33L1.50 9.16L1.50 6.84L3.28 6.67L3.72 5.61L2.59 4.22L4.22 2.59L5.61 3.72L6.67 3.28L6.84 1.50L9.16 1.50L9.33 3.28L10.39 3.72L11.78 2.59L13.41 4.22L12.28 5.61Z" fill="none" stroke="#adadad" stroke-width="1" stroke-linejoin="round" stroke-dasharray="2.2 .5"/><circle cx="8" cy="8" r="2.4" fill="none" stroke="#d2d2d2" stroke-width="1"/><text x="6.4" y="14.4" font-family="Liberation Serif,serif" font-weight="bold" font-style="italic" font-size="12" fill="#000">f</text><path d="M9.6 9.2H14.6" stroke="#000" stroke-width="1"/><text x="12" y="17" font-family="Liberation Serif,serif" font-weight="bold" font-style="italic" font-size="10.5" fill="#000">x</text><circle cx="16.4" cy="12.4" r=".6" fill="#111"/></svg>
<svg style="left:1486px;top:279px" width="15" height="15"><rect x=".6" y=".5" width="12.7" height="13" rx="1.2" fill="#fff" stroke="#94979c" stroke-width="1"/><path d="M9.4 .6V13.4" stroke="#94979c" stroke-width="1"/><rect x="9.9" y="4.8" width="3" height="4.4" fill="#c8cbcf"/><path d="M9.6 4.6H13.2M9.6 9.4H13.2" stroke="#94979c" stroke-width=".7"/><circle cx="11.5" cy="2.7" r=".65" fill="#555"/><circle cx="11.5" cy="11.4" r=".65" fill="#555"/><path d="M2.4 3L3.4 2.2V6M5.8 4.6H7.8M2.2 8.5C2.8 7.5 4.4 7.8 4 9.1L2.2 11.3H4.6M5.8 9.6H7.8" fill="none" stroke="#6c6f74" stroke-width="1"/></svg>
<svg style="left:1509px;top:278px" width="17" height="15"><path d="M14.53 6.17L16.60 6.31L16.60 8.69L14.53 8.83L14.00 10.11L15.36 11.68L13.68 13.36L12.11 12.00L10.83 12.53L10.69 14.60L8.31 14.60L8.17 12.53L6.89 12.00L5.32 13.36L3.64 11.68L5.00 10.11L4.47 8.83L2.40 8.69L2.40 6.31L4.47 6.17L5.00 4.89L3.64 3.32L5.32 1.64L6.89 3.00L8.17 2.47L8.31 0.40L10.69 0.40L10.83 2.47L12.11 3.00L13.68 1.64L15.36 3.32L14.00 4.89Z" fill="none" stroke="#86a5bf" stroke-width="1.1"/></svg>
<svg style="left:1282px;top:305px" width="18" height="18"><circle cx="9" cy="9" r="7.5" fill="url(#gup)" stroke="#3f3fa0" stroke-width="1"/><path d="M9 4.3L13.3 8.9H11.1V13H6.9V8.9H4.7Z" fill="#fff" stroke="#3a3a9c" stroke-width="1.8" stroke-linejoin="round" paint-order="stroke"/></svg>
<svg style="left:1460px;top:305px" width="20" height="20"><path d="M12.72 6.67L14.50 6.84L14.50 9.16L12.72 9.33L12.28 10.39L13.41 11.78L11.78 13.41L10.39 12.28L9.33 12.72L9.16 14.50L6.84 14.50L6.67 12.72L5.61 12.28L4.22 13.41L2.59 11.78L3.72 10.39L3.28 9.33L1.50 9.16L1.50 6.84L3.28 6.67L3.72 5.61L2.59 4.22L4.22 2.59L5.61 3.72L6.67 3.28L6.84 1.50L9.16 1.50L9.33 3.28L10.39 3.72L11.78 2.59L13.41 4.22L12.28 5.61Z" fill="none" stroke="#adadad" stroke-width="1" stroke-linejoin="round" stroke-dasharray="2.2 .5"/><circle cx="8" cy="8" r="2.4" fill="none" stroke="#d2d2d2" stroke-width="1"/><text x="6.4" y="14.4" font-family="Liberation Serif,serif" font-weight="bold" font-style="italic" font-size="12" fill="#000">f</text><path d="M9.6 9.2H14.6" stroke="#000" stroke-width="1"/><text x="12" y="17" font-family="Liberation Serif,serif" font-weight="bold" font-style="italic" font-size="10.5" fill="#000">x</text><circle cx="16.4" cy="12.4" r=".6" fill="#111"/></svg>
<svg style="left:1486px;top:307px" width="15" height="15"><rect x=".6" y=".5" width="12.7" height="13" rx="1.2" fill="#fff" stroke="#94979c" stroke-width="1"/><path d="M9.4 .6V13.4" stroke="#94979c" stroke-width="1"/><rect x="9.9" y="4.8" width="3" height="4.4" fill="#c8cbcf"/><path d="M9.6 4.6H13.2M9.6 9.4H13.2" stroke="#94979c" stroke-width=".7"/><circle cx="11.5" cy="2.7" r=".65" fill="#555"/><circle cx="11.5" cy="11.4" r=".65" fill="#555"/><path d="M2.4 3L3.4 2.2V6M5.8 4.6H7.8M2.2 8.5C2.8 7.5 4.4 7.8 4 9.1L2.2 11.3H4.6M5.8 9.6H7.8" fill="none" stroke="#6c6f74" stroke-width="1"/></svg>
<svg style="left:1509px;top:306px" width="17" height="15"><path d="M14.53 6.17L16.60 6.31L16.60 8.69L14.53 8.83L14.00 10.11L15.36 11.68L13.68 13.36L12.11 12.00L10.83 12.53L10.69 14.60L8.31 14.60L8.17 12.53L6.89 12.00L5.32 13.36L3.64 11.68L5.00 10.11L4.47 8.83L2.40 8.69L2.40 6.31L4.47 6.17L5.00 4.89L3.64 3.32L5.32 1.64L6.89 3.00L8.17 2.47L8.31 0.40L10.69 0.40L10.83 2.47L12.11 3.00L13.68 1.64L15.36 3.32L14.00 4.89Z" fill="none" stroke="#86a5bf" stroke-width="1.1"/></svg>
<svg style="left:1282px;top:333px" width="18" height="18"><circle cx="9" cy="9" r="7.5" fill="url(#gup)" stroke="#3f3fa0" stroke-width="1"/><path d="M9 4.3L13.3 8.9H11.1V13H6.9V8.9H4.7Z" fill="#fff" stroke="#3a3a9c" stroke-width="1.8" stroke-linejoin="round" paint-order="stroke"/></svg>
<svg style="left:1460px;top:333px" width="20" height="20"><path d="M12.72 6.67L14.50 6.84L14.50 9.16L12.72 9.33L12.28 10.39L13.41 11.78L11.78 13.41L10.39 12.28L9.33 12.72L9.16 14.50L6.84 14.50L6.67 12.72L5.61 12.28L4.22 13.41L2.59 11.78L3.72 10.39L3.28 9.33L1.50 9.16L1.50 6.84L3.28 6.67L3.72 5.61L2.59 4.22L4.22 2.59L5.61 3.72L6.67 3.28L6.84 1.50L9.16 1.50L9.33 3.28L10.39 3.72L11.78 2.59L13.41 4.22L12.28 5.61Z" fill="none" stroke="#adadad" stroke-width="1" stroke-linejoin="round" stroke-dasharray="2.2 .5"/><circle cx="8" cy="8" r="2.4" fill="none" stroke="#d2d2d2" stroke-width="1"/><text x="6.4" y="14.4" font-family="Liberation Serif,serif" font-weight="bold" font-style="italic" font-size="12" fill="#000">f</text><path d="M9.6 9.2H14.6" stroke="#000" stroke-width="1"/><text x="12" y="17" font-family="Liberation Serif,serif" font-weight="bold" font-style="italic" font-size="10.5" fill="#000">x</text><circle cx="16.4" cy="12.4" r=".6" fill="#111"/></svg>
<svg style="left:1486px;top:335px" width="15" height="15"><rect x=".6" y=".5" width="12.7" height="13" rx="1.2" fill="#fff" stroke="#94979c" stroke-width="1"/><path d="M9.4 .6V13.4" stroke="#94979c" stroke-width="1"/><rect x="9.9" y="4.8" width="3" height="4.4" fill="#c8cbcf"/><path d="M9.6 4.6H13.2M9.6 9.4H13.2" stroke="#94979c" stroke-width=".7"/><circle cx="11.5" cy="2.7" r=".65" fill="#555"/><circle cx="11.5" cy="11.4" r=".65" fill="#555"/><path d="M2.4 3L3.4 2.2V6M5.8 4.6H7.8M2.2 8.5C2.8 7.5 4.4 7.8 4 9.1L2.2 11.3H4.6M5.8 9.6H7.8" fill="none" stroke="#6c6f74" stroke-width="1"/></svg>
<svg style="left:1509px;top:334px" width="17" height="15"><path d="M14.53 6.17L16.60 6.31L16.60 8.69L14.53 8.83L14.00 10.11L15.36 11.68L13.68 13.36L12.11 12.00L10.83 12.53L10.69 14.60L8.31 14.60L8.17 12.53L6.89 12.00L5.32 13.36L3.64 11.68L5.00 10.11L4.47 8.83L2.40 8.69L2.40 6.31L4.47 6.17L5.00 4.89L3.64 3.32L5.32 1.64L6.89 3.00L8.17 2.47L8.31 0.40L10.69 0.40L10.83 2.47L12.11 3.00L13.68 1.64L15.36 3.32L14.00 4.89Z" fill="none" stroke="#86a5bf" stroke-width="1.1"/></svg>
<svg style="left:1282px;top:361px" width="18" height="18"><circle cx="9" cy="9" r="7.5" fill="url(#gup)" stroke="#3f3fa0" stroke-width="1"/><path d="M9 4.3L13.3 8.9H11.1V13H6.9V8.9H4.7Z" fill="#fff" stroke="#3a3a9c" stroke-width="1.8" stroke-linejoin="round" paint-order="stroke"/></svg>
<svg style="left:1460px;top:361px" width="20" height="20"><path d="M12.72 6.67L14.50 6.84L14.50 9.16L12.72 9.33L12.28 10.39L13.41 11.78L11.78 13.41L10.39 12.28L9.33 12.72L9.16 14.50L6.84 14.50L6.67 12.72L5.61 12.28L4.22 13.41L2.59 11.78L3.72 10.39L3.28 9.33L1.50 9.16L1.50 6.84L3.28 6.67L3.72 5.61L2.59 4.22L4.22 2.59L5.61 3.72L6.67 3.28L6.84 1.50L9.16 1.50L9.33 3.28L10.39 3.72L11.78 2.59L13.41 4.22L12.28 5.61Z" fill="none" stroke="#adadad" stroke-width="1" stroke-linejoin="round" stroke-dasharray="2.2 .5"/><circle cx="8" cy="8" r="2.4" fill="none" stroke="#d2d2d2" stroke-width="1"/><text x="6.4" y="14.4" font-family="Liberation Serif,serif" font-weight="bold" font-style="italic" font-size="12" fill="#000">f</text><path d="M9.6 9.2H14.6" stroke="#000" stroke-width="1"/><text x="12" y="17" font-family="Liberation Serif,serif" font-weight="bold" font-style="italic" font-size="10.5" fill="#000">x</text><circle cx="16.4" cy="12.4" r=".6" fill="#111"/></svg>
<svg style="left:1486px;top:363px" width="15" height="15"><rect x=".6" y=".5" width="12.7" height="13" rx="1.2" fill="#fff" stroke="#94979c" stroke-width="1"/><path d="M9.4 .6V13.4" stroke="#94979c" stroke-width="1"/><rect x="9.9" y="4.8" width="3" height="4.4" fill="#c8cbcf"/><path d="M9.6 4.6H13.2M9.6 9.4H13.2" stroke="#94979c" stroke-width=".7"/><circle cx="11.5" cy="2.7" r=".65" fill="#555"/><circle cx="11.5" cy="11.4" r=".65" fill="#555"/><path d="M2.4 3L3.4 2.2V6M5.8 4.6H7.8M2.2 8.5C2.8 7.5 4.4 7.8 4 9.1L2.2 11.3H4.6M5.8 9.6H7.8" fill="none" stroke="#6c6f74" stroke-width="1"/></svg>
<svg style="left:1509px;top:362px" width="17" height="15"><path d="M14.53 6.17L16.60 6.31L16.60 8.69L14.53 8.83L14.00 10.11L15.36 11.68L13.68 13.36L12.11 12.00L10.83 12.53L10.69 14.60L8.31 14.60L8.17 12.53L6.89 12.00L5.32 13.36L3.64 11.68L5.00 10.11L4.47 8.83L2.40 8.69L2.40 6.31L4.47 6.17L5.00 4.89L3.64 3.32L5.32 1.64L6.89 3.00L8.17 2.47L8.31 0.40L10.69 0.40L10.83 2.47L12.11 3.00L13.68 1.64L15.36 3.32L14.00 4.89Z" fill="none" stroke="#86a5bf" stroke-width="1.1"/></svg>
<svg style="left:1282px;top:389px" width="18" height="18"><circle cx="9" cy="9" r="7.5" fill="url(#gup)" stroke="#3f3fa0" stroke-width="1"/><path d="M9 4.3L13.3 8.9H11.1V13H6.9V8.9H4.7Z" fill="#fff" stroke="#3a3a9c" stroke-width="1.8" stroke-linejoin="round" paint-order="stroke"/></svg>
<svg style="left:1460px;top:389px" width="20" height="20"><path d="M12.72 6.67L14.50 6.84L14.50 9.16L12.72 9.33L12.28 10.39L13.41 11.78L11.78 13.41L10.39 12.28L9.33 12.72L9.16 14.50L6.84 14.50L6.67 12.72L5.61 12.28L4.22 13.41L2.59 11.78L3.72 10.39L3.28 9.33L1.50 9.16L1.50 6.84L3.28 6.67L3.72 5.61L2.59 4.22L4.22 2.59L5.61 3.72L6.67 3.28L6.84 1.50L9.16 1.50L9.33 3.28L10.39 3.72L11.78 2.59L13.41 4.22L12.28 5.61Z" fill="none" stroke="#adadad" stroke-width="1" stroke-linejoin="round" stroke-dasharray="2.2 .5"/><circle cx="8" cy="8" r="2.4" fill="none" stroke="#d2d2d2" stroke-width="1"/><text x="6.4" y="14.4" font-family="Liberation Serif,serif" font-weight="bold" font-style="italic" font-size="12" fill="#000">f</text><path d="M9.6 9.2H14.6" stroke="#000" stroke-width="1"/><text x="12" y="17" font-family="Liberation Serif,serif" font-weight="bold" font-style="italic" font-size="10.5" fill="#000">x</text><circle cx="16.4" cy="12.4" r=".6" fill="#111"/></svg>
<svg style="left:1486px;top:391px" width="15" height="15"><rect x=".6" y=".5" width="12.7" height="13" rx="1.2" fill="#fff" stroke="#94979c" stroke-width="1"/><path d="M9.4 .6V13.4" stroke="#94979c" stroke-width="1"/><rect x="9.9" y="4.8" width="3" height="4.4" fill="#c8cbcf"/><path d="M9.6 4.6H13.2M9.6 9.4H13.2" stroke="#94979c" stroke-width=".7"/><circle cx="11.5" cy="2.7" r=".65" fill="#555"/><circle cx="11.5" cy="11.4" r=".65" fill="#555"/><path d="M2.4 3L3.4 2.2V6M5.8 4.6H7.8M2.2 8.5C2.8 7.5 4.4 7.8 4 9.1L2.2 11.3H4.6M5.8 9.6H7.8" fill="none" stroke="#6c6f74" stroke-width="1"/></svg>
<svg style="left:1509px;top:390px" width="17" height="15"><path d="M14.53 6.17L16.60 6.31L16.60 8.69L14.53 8.83L14.00 10.11L15.36 11.68L13.68 13.36L12.11 12.00L10.83 12.53L10.69 14.60L8.31 14.60L8.17 12.53L6.89 12.00L5.32 13.36L3.64 11.68L5.00 10.11L4.47 8.83L2.40 8.69L2.40 6.31L4.47 6.17L5.00 4.89L3.64 3.32L5.32 1.64L6.89 3.00L8.17 2.47L8.31 0.40L10.69 0.40L10.83 2.47L12.11 3.00L13.68 1.64L15.36 3.32L14.00 4.89Z" fill="none" stroke="#86a5bf" stroke-width="1.1"/></svg>
<svg style="left:1282px;top:417px" width="18" height="18"><circle cx="9" cy="9" r="7.5" fill="url(#gup)" stroke="#3f3fa0" stroke-width="1"/><path d="M9 4.3L13.3 8.9H11.1V13H6.9V8.9H4.7Z" fill="#fff" stroke="#3a3a9c" stroke-width="1.8" stroke-linejoin="round" paint-order="stroke"/></svg>
<svg style="left:1460px;top:417px" width="20" height="20"><path d="M12.72 6.67L14.50 6.84L14.50 9.16L12.72 9.33L12.28 10.39L13.41 11.78L11.78 13.41L10.39 12.28L9.33 12.72L9.16 14.50L6.84 14.50L6.67 12.72L5.61 12.28L4.22 13.41L2.59 11.78L3.72 10.39L3.28 9.33L1.50 9.16L1.50 6.84L3.28 6.67L3.72 5.61L2.59 4.22L4.22 2.59L5.61 3.72L6.67 3.28L6.84 1.50L9.16 1.50L9.33 3.28L10.39 3.72L11.78 2.59L13.41 4.22L12.28 5.61Z" fill="none" stroke="#adadad" stroke-width="1" stroke-linejoin="round" stroke-dasharray="2.2 .5"/><circle cx="8" cy="8" r="2.4" fill="none" stroke="#d2d2d2" stroke-width="1"/><text x="6.4" y="14.4" font-family="Liberation Serif,serif" font-weight="bold" font-style="italic" font-size="12" fill="#000">f</text><path d="M9.6 9.2H14.6" stroke="#000" stroke-width="1"/><text x="12" y="17" font-family="Liberation Serif,serif" font-weight="bold" font-style="italic" font-size="10.5" fill="#000">x</text><circle cx="16.4" cy="12.4" r=".6" fill="#111"/></svg>
<svg style="left:1486px;top:419px" width="15" height="15"><rect x=".6" y=".5" width="12.7" height="13" rx="1.2" fill="#fff" stroke="#94979c" stroke-width="1"/><path d="M9.4 .6V13.4" stroke="#94979c" stroke-width="1"/><rect x="9.9" y="4.8" width="3" height="4.4" fill="#c8cbcf"/><path d="M9.6 4.6H13.2M9.6 9.4H13.2" stroke="#94979c" stroke-width=".7"/><circle cx="11.5" cy="2.7" r=".65" fill="#555"/><circle cx="11.5" cy="11.4" r=".65" fill="#555"/><path d="M2.4 3L3.4 2.2V6M5.8 4.6H7.8M2.2 8.5C2.8 7.5 4.4 7.8 4 9.1L2.2 11.3H4.6M5.8 9.6H7.8" fill="none" stroke="#6c6f74" stroke-width="1"/></svg>
<svg style="left:1509px;top:418px" width="17" height="15"><path d="M14.53 6.17L16.60 6.31L16.60 8.69L14.53 8.83L14.00 10.11L15.36 11.68L13.68 13.36L12.11 12.00L10.83 12.53L10.69 14.60L8.31 14.60L8.17 12.53L6.89 12.00L5.32 13.36L3.64 11.68L5.00 10.11L4.47 8.83L2.40 8.69L2.40 6.31L4.47 6.17L5.00 4.89L3.64 3.32L5.32 1.64L6.89 3.00L8.17 2.47L8.31 0.40L10.69 0.40L10.83 2.47L12.11 3.00L13.68 1.64L15.36 3.32L14.00 4.89Z" fill="none" stroke="#86a5bf" stroke-width="1.1"/></svg>
<svg style="left:1282px;top:502px" width="18" height="18"><circle cx="9" cy="9" r="7.5" fill="#fff" stroke="#d8d9dd" stroke-width="1.2"/><circle cx="9" cy="9" r="5" fill="none" stroke="#efeff0" stroke-width="1.8"/><path d="M3.4 14.4L8.4 9.5" stroke="#b0b0b0" stroke-width="1.1"/><g transform="translate(10.2 8) scale(.88) translate(-10 -8)"><path d="M10.4 3.8L14.2 7.5L13.5 8.1L12.4 7.9L10.9 9.6L11.2 11.5L10.5 12.1L5.8 7.5L6.5 6.8L8.4 7.1L10 5.5L9.8 4.4Z" fill="#f40c0c"/><path d="M7 7.2L8.8 7.4L10.4 5.7" stroke="#ff7d7d" stroke-width=".7" fill="none"/></g></svg>
<svg style="left:1282px;top:530px" width="18" height="18"><circle cx="9" cy="9" r="7.5" fill="#fff" stroke="#d8d9dd" stroke-width="1.2"/><circle cx="9" cy="9" r="5" fill="none" stroke="#efeff0" stroke-width="1.8"/><path d="M3.4 14.4L8.4 9.5" stroke="#b0b0b0" stroke-width="1.1"/><g transform="translate(10.2 8) scale(.88) translate(-10 -8)"><path d="M10.4 3.8L14.2 7.5L13.5 8.1L12.4 7.9L10.9 9.6L11.2 11.5L10.5 12.1L5.8 7.5L6.5 6.8L8.4 7.1L10 5.5L9.8 4.4Z" fill="#f40c0c"/><path d="M7 7.2L8.8 7.4L10.4 5.7" stroke="#ff7d7d" stroke-width=".7" fill="none"/></g></svg>
<svg style="left:1282px;top:558px" width="18" height="18"><circle cx="9" cy="9" r="7.5" fill="url(#gup)" stroke="#3f3fa0" stroke-width="1"/><path d="M9 4.3L13.3 8.9H11.1V13H6.9V8.9H4.7Z" fill="#fff" stroke="#3a3a9c" stroke-width="1.8" stroke-linejoin="round" paint-order="stroke"/></svg>
<svg style="left:1460px;top:558px" width="20" height="20"><path d="M12.72 6.67L14.50 6.84L14.50 9.16L12.72 9.33L12.28 10.39L13.41 11.78L11.78 13.41L10.39 12.28L9.33 12.72L9.16 14.50L6.84 14.50L6.67 12.72L5.61 12.28L4.22 13.41L2.59 11.78L3.72 10.39L3.28 9.33L1.50 9.16L1.50 6.84L3.28 6.67L3.72 5.61L2.59 4.22L4.22 2.59L5.61 3.72L6.67 3.28L6.84 1.50L9.16 1.50L9.33 3.28L10.39 3.72L11.78 2.59L13.41 4.22L12.28 5.61Z" fill="none" stroke="#adadad" stroke-width="1" stroke-linejoin="round" stroke-dasharray="2.2 .5"/><circle cx="8" cy="8" r="2.4" fill="none" stroke="#d2d2d2" stroke-width="1"/><text x="6.4" y="14.4" font-family="Liberation Serif,serif" font-weight="bold" font-style="italic" font-size="12" fill="#000">f</text><path d="M9.6 9.2H14.6" stroke="#000" stroke-width="1"/><text x="12" y="17" font-family="Liberation Serif,serif" font-weight="bold" font-style="italic" font-size="10.5" fill="#000">x</text><circle cx="16.4" cy="12.4" r=".6" fill="#111"/></svg>
<svg style="left:1486px;top:560px" width="15" height="15"><rect x=".6" y=".5" width="12.7" height="13" rx="1.2" fill="#fff" stroke="#94979c" stroke-width="1"/><path d="M9.4 .6V13.4" stroke="#94979c" stroke-width="1"/><rect x="9.9" y="4.8" width="3" height="4.4" fill="#c8cbcf"/><path d="M9.6 4.6H13.2M9.6 9.4H13.2" stroke="#94979c" stroke-width=".7"/><circle cx="11.5" cy="2.7" r=".65" fill="#555"/><circle cx="11.5" cy="11.4" r=".65" fill="#555"/><path d="M2.4 3L3.4 2.2V6M5.8 4.6H7.8M2.2 8.5C2.8 7.5 4.4 7.8 4 9.1L2.2 11.3H4.6M5.8 9.6H7.8" fill="none" stroke="#6c6f74" stroke-width="1"/></svg>
<svg style="left:1509px;top:559px" width="17" height="15"><path d="M14.53 6.17L16.60 6.31L16.60 8.69L14.53 8.83L14.00 10.11L15.36 11.68L13.68 13.36L12.11 12.00L10.83 12.53L10.69 14.60L8.31 14.60L8.17 12.53L6.89 12.00L5.32 13.36L3.64 11.68L5.00 10.11L4.47 8.83L2.40 8.69L2.40 6.31L4.47 6.17L5.00 4.89L3.64 3.32L5.32 1.64L6.89 3.00L8.17 2.47L8.31 0.40L10.69 0.40L10.83 2.47L12.11 3.00L13.68 1.64L15.36 3.32L14.00 4.89Z" fill="none" stroke="#86a5bf" stroke-width="1.1"/></svg>
<svg style="left:1282px;top:586px" width="18" height="18"><circle cx="9" cy="9" r="7.5" fill="url(#gup)" stroke="#3f3fa0" stroke-width="1"/><path d="M9 4.3L13.3 8.9H11.1V13H6.9V8.9H4.7Z" fill="#fff" stroke="#3a3a9c" stroke-width="1.8" stroke-linejoin="round" paint-order="stroke"/></svg>
<svg style="left:1460px;top:586px" width="20" height="20"><path d="M12.72 6.67L14.50 6.84L14.50 9.16L12.72 9.33L12.28 10.39L13.41 11.78L11.78 13.41L10.39 12.28L9.33 12.72L9.16 14.50L6.84 14.50L6.67 12.72L5.61 12.28L4.22 13.41L2.59 11.78L3.72 10.39L3.28 9.33L1.50 9.16L1.50 6.84L3.28 6.67L3.72 5.61L2.59 4.22L4.22 2.59L5.61 3.72L6.67 3.28L6.84 1.50L9.16 1.50L9.33 3.28L10.39 3.72L11.78 2.59L13.41 4.22L12.28 5.61Z" fill="none" stroke="#adadad" stroke-width="1" stroke-linejoin="round" stroke-dasharray="2.2 .5"/><circle cx="8" cy="8" r="2.4" fill="none" stroke="#d2d2d2" stroke-width="1"/><text x="6.4" y="14.4" font-family="Liberation Serif,serif" font-weight="bold" font-style="italic" font-size="12" fill="#000">f</text><path d="M9.6 9.2H14.6" stroke="#000" stroke-width="1"/><text x="12" y="17" font-family="Liberation Serif,serif" font-weight="bold" font-style="italic" font-size="10.5" fill="#000">x</text><circle cx="16.4" cy="12.4" r=".6" fill="#111"/></svg>
<svg style="left:1486px;top:588px" width="15" height="15"><rect x=".6" y=".5" width="12.7" height="13" rx="1.2" fill="#fff" stroke="#94979c" stroke-width="1"/><path d="M9.4 .6V13.4" stroke="#94979c" stroke-width="1"/><rect x="9.9" y="4.8" width="3" height="4.4" fill="#c8cbcf"/><path d="M9.6 4.6H13.2M9.6 9.4H13.2" stroke="#94979c" stroke-width=".7"/><circle cx="11.5" cy="2.7" r=".65" fill="#555"/><circle cx="11.5" cy="11.4" r=".65" fill="#555"/><path d="M2.4 3L3.4 2.2V6M5.8 4.6H7.8M2.2 8.5C2.8 7.5 4.4 7.8 4 9.1L2.2 11.3H4.6M5.8 9.6H7.8" fill="none" stroke="#6c6f74" stroke-width="1"/></svg>
<svg style="left:1509px;top:587px" width="17" height="15"><path d="M14.53 6.17L16.60 6.31L16.60 8.69L14.53 8.83L14.00 10.11L15.36 11.68L13.68 13.36L12.11 12.00L10.83 12.53L10.69 14.60L8.31 14.60L8.17 12.53L6.89 12.00L5.32 13.36L3.64 11.68L5.00 10.11L4.47 8.83L2.40 8.69L2.40 6.31L4.47 6.17L5.00 4.89L3.64 3.32L5.32 1.64L6.89 3.00L8.17 2.47L8.31 0.40L10.69 0.40L10.83 2.47L12.11 3.00L13.68 1.64L15.36 3.32L14.00 4.89Z" fill="none" stroke="#86a5bf" stroke-width="1.1"/></svg>
<svg style="left:1282px;top:614px" width="18" height="18"><circle cx="9" cy="9" r="7.5" fill="url(#gup)" stroke="#3f3fa0" stroke-width="1"/><path d="M9 4.3L13.3 8.9H11.1V13H6.9V8.9H4.7Z" fill="#fff" stroke="#3a3a9c" stroke-width="1.8" stroke-linejoin="round" paint-order="stroke"/></svg>
<svg style="left:1460px;top:614px" width="20" height="20"><path d="M12.72 6.67L14.50 6.84L14.50 9.16L12.72 9.33L12.28 10.39L13.41 11.78L11.78 13.41L10.39 12.28L9.33 12.72L9.16 14.50L6.84 14.50L6.67 12.72L5.61 12.28L4.22 13.41L2.59 11.78L3.72 10.39L3.28 9.33L1.50 9.16L1.50 6.84L3.28 6.67L3.72 5.61L2.59 4.22L4.22 2.59L5.61 3.72L6.67 3.28L6.84 1.50L9.16 1.50L9.33 3.28L10.39 3.72L11.78 2.59L13.41 4.22L12.28 5.61Z" fill="none" stroke="#adadad" stroke-width="1" stroke-linejoin="round" stroke-dasharray="2.2 .5"/><circle cx="8" cy="8" r="2.4" fill="none" stroke="#d2d2d2" stroke-width="1"/><text x="6.4" y="14.4" font-family="Liberation Serif,serif" font-weight="bold" font-style="italic" font-size="12" fill="#000">f</text><path d="M9.6 9.2H14.6" stroke="#000" stroke-width="1"/><text x="12" y="17" font-family="Liberation Serif,serif" font-weight="bold" font-style="italic" font-size="10.5" fill="#000">x</text><circle cx="16.4" cy="12.4" r=".6" fill="#111"/></svg>
<svg style="left:1486px;top:616px" width="15" height="15"><rect x=".6" y=".5" width="12.7" height="13" rx="1.2" fill="#fff" stroke="#94979c" stroke-width="1"/><path d="M9.4 .6V13.4" stroke="#94979c" stroke-width="1"/><rect x="9.9" y="4.8" width="3" height="4.4" fill="#c8cbcf"/><path d="M9.6 4.6H13.2M9.6 9.4H13.2" stroke="#94979c" stroke-width=".7"/><circle cx="11.5" cy="2.7" r=".65" fill="#555"/><circle cx="11.5" cy="11.4" r=".65" fill="#555"/><path d="M2.4 3L3.4 2.2V6M5.8 4.6H7.8M2.2 8.5C2.8 7.5 4.4 7.8 4 9.1L2.2 11.3H4.6M5.8 9.6H7.8" fill="none" stroke="#6c6f74" stroke-width="1"/></svg>
<svg style="left:1509px;top:615px" width="17" height="15"><path d="M14.53 6.17L16.60 6.31L16.60 8.69L14.53 8.83L14.00 10.11L15.36 11.68L13.68 13.36L12.11 12.00L10.83 12.53L10.69 14.60L8.31 14.60L8.17 12.53L6.89 12.00L5.32 13.36L3.64 11.68L5.00 10.11L4.47 8.83L2.40 8.69L2.40 6.31L4.47 6.17L5.00 4.89L3.64 3.32L5.32 1.64L6.89 3.00L8.17 2.47L8.31 0.40L10.69 0.40L10.83 2.47L12.11 3.00L13.68 1.64L15.36 3.32L14.00 4.89Z" fill="none" stroke="#86a5bf" stroke-width="1.1"/></svg>
<svg style="left:1282px;top:642px" width="18" height="18"><circle cx="9" cy="9" r="7.5" fill="url(#gup)" stroke="#3f3fa0" stroke-width="1"/><path d="M9 4.3L13.3 8.9H11.1V13H6.9V8.9H4.7Z" fill="#fff" stroke="#3a3a9c" stroke-width="1.8" stroke-linejoin="round" paint-order="stroke"/></svg>
<svg style="left:1460px;top:642px" width="20" height="20"><path d="M12.72 6.67L14.50 6.84L14.50 9.16L12.72 9.33L12.28 10.39L13.41 11.78L11.78 13.41L10.39 12.28L9.33 12.72L9.16 14.50L6.84 14.50L6.67 12.72L5.61 12.28L4.22 13.41L2.59 11.78L3.72 10.39L3.28 9.33L1.50 9.16L1.50 6.84L3.28 6.67L3.72 5.61L2.59 4.22L4.22 2.59L5.61 3.72L6.67 3.28L6.84 1.50L9.16 1.50L9.33 3.28L10.39 3.72L11.78 2.59L13.41 4.22L12.28 5.61Z" fill="none" stroke="#adadad" stroke-width="1" stroke-linejoin="round" stroke-dasharray="2.2 .5"/><circle cx="8" cy="8" r="2.4" fill="none" stroke="#d2d2d2" stroke-width="1"/><text x="6.4" y="14.4" font-family="Liberation Serif,serif" font-weight="bold" font-style="italic" font-size="12" fill="#000">f</text><path d="M9.6 9.2H14.6" stroke="#000" stroke-width="1"/><text x="12" y="17" font-family="Liberation Serif,serif" font-weight="bold" font-style="italic" font-size="10.5" fill="#000">x</text><circle cx="16.4" cy="12.4" r=".6" fill="#111"/></svg>
<svg style="left:1486px;top:644px" width="15" height="15"><rect x=".6" y=".5" width="12.7" height="13" rx="1.2" fill="#fff" stroke="#94979c" stroke-width="1"/><path d="M9.4 .6V13.4" stroke="#94979c" stroke-width="1"/><rect x="9.9" y="4.8" width="3" height="4.4" fill="#c8cbcf"/><path d="M9.6 4.6H13.2M9.6 9.4H13.2" stroke="#94979c" stroke-width=".7"/><circle cx="11.5" cy="2.7" r=".65" fill="#555"/><circle cx="11.5" cy="11.4" r=".65" fill="#555"/><path d="M2.4 3L3.4 2.2V6M5.8 4.6H7.8M2.2 8.5C2.8 7.5 4.4 7.8 4 9.1L2.2 11.3H4.6M5.8 9.6H7.8" fill="none" stroke="#6c6f74" stroke-width="1"/></svg>
<svg style="left:1509px;top:643px" width="17" height="15"><path d="M14.53 6.17L16.60 6.31L16.60 8.69L14.53 8.83L14.00 10.11L15.36 11.68L13.68 13.36L12.11 12.00L10.83 12.53L10.69 14.60L8.31 14.60L8.17 12.53L6.89 12.00L5.32 13.36L3.64 11.68L5.00 10.11L4.47 8.83L2.40 8.69L2.40 6.31L4.47 6.17L5.00 4.89L3.64 3.32L5.32 1.64L6.89 3.00L8.17 2.47L8.31 0.40L10.69 0.40L10.83 2.47L12.11 3.00L13.68 1.64L15.36 3.32L14.00 4.89Z" fill="none" stroke="#86a5bf" stroke-width="1.1"/></svg>
<svg style="left:1282px;top:670px" width="18" height="18"><circle cx="9" cy="9" r="7.5" fill="url(#gup)" stroke="#3f3fa0" stroke-width="1"/><path d="M9 4.3L13.3 8.9H11.1V13H6.9V8.9H4.7Z" fill="#fff" stroke="#3a3a9c" stroke-width="1.8" stroke-linejoin="round" paint-order="stroke"/></svg>
<svg style="left:1460px;top:670px" width="20" height="20"><path d="M12.72 6.67L14.50 6.84L14.50 9.16L12.72 9.33L12.28 10.39L13.41 11.78L11.78 13.41L10.39 12.28L9.33 12.72L9.16 14.50L6.84 14.50L6.67 12.72L5.61 12.28L4.22 13.41L2.59 11.78L3.72 10.39L3.28 9.33L1.50 9.16L1.50 6.84L3.28 6.67L3.72 5.61L2.59 4.22L4.22 2.59L5.61 3.72L6.67 3.28L6.84 1.50L9.16 1.50L9.33 3.28L10.39 3.72L11.78 2.59L13.41 4.22L12.28 5.61Z" fill="none" stroke="#adadad" stroke-width="1" stroke-linejoin="round" stroke-dasharray="2.2 .5"/><circle cx="8" cy="8" r="2.4" fill="none" stroke="#d2d2d2" stroke-width="1"/><text x="6.4" y="14.4" font-family="Liberation Serif,serif" font-weight="bold" font-style="italic" font-size="12" fill="#000">f</text><path d="M9.6 9.2H14.6" stroke="#000" stroke-width="1"/><text x="12" y="17" font-family="Liberation Serif,serif" font-weight="bold" font-style="italic" font-size="10.5" fill="#000">x</text><circle cx="16.4" cy="12.4" r=".6" fill="#111"/></svg>
<svg style="left:1486px;top:672px" width="15" height="15"><rect x=".6" y=".5" width="12.7" height="13" rx="1.2" fill="#fff" stroke="#94979c" stroke-width="1"/><path d="M9.4 .6V13.4" stroke="#94979c" stroke-width="1"/><rect x="9.9" y="4.8" width="3" height="4.4" fill="#c8cbcf"/><path d="M9.6 4.6H13.2M9.6 9.4H13.2" stroke="#94979c" stroke-width=".7"/><circle cx="11.5" cy="2.7" r=".65" fill="#555"/><circle cx="11.5" cy="11.4" r=".65" fill="#555"/><path d="M2.4 3L3.4 2.2V6M5.8 4.6H7.8M2.2 8.5C2.8 7.5 4.4 7.8 4 9.1L2.2 11.3H4.6M5.8 9.6H7.8" fill="none" stroke="#6c6f74" stroke-width="1"/></svg>
<svg style="left:1509px;top:671px" width="17" height="15"><path d="M14.53 6.17L16.60 6.31L16.60 8.69L14.53 8.83L14.00 10.11L15.36 11.68L13.68 13.36L12.11 12.00L10.83 12.53L10.69 14.60L8.31 14.60L8.17 12.53L6.89 12.00L5.32 13.36L3.64 11.68L5.00 10.11L4.47 8.83L2.40 8.69L2.40 6.31L4.47 6.17L5.00 4.89L3.64 3.32L5.32 1.64L6.89 3.00L8.17 2.47L8.31 0.40L10.69 0.40L10.83 2.47L12.11 3.00L13.68 1.64L15.36 3.32L14.00 4.89Z" fill="none" stroke="#86a5bf" stroke-width="1.1"/></svg>
<svg style="left:1282px;top:698px" width="18" height="18"><circle cx="9" cy="9" r="7.5" fill="url(#gup)" stroke="#3f3fa0" stroke-width="1"/><path d="M9 4.3L13.3 8.9H11.1V13H6.9V8.9H4.7Z" fill="#fff" stroke="#3a3a9c" stroke-width="1.8" stroke-linejoin="round" paint-order="stroke"/></svg>
<svg style="left:1460px;top:698px" width="20" height="20"><path d="M12.72 6.67L14.50 6.84L14.50 9.16L12.72 9.33L12.28 10.39L13.41 11.78L11.78 13.41L10.39 12.28L9.33 12.72L9.16 14.50L6.84 14.50L6.67 12.72L5.61 12.28L4.22 13.41L2.59 11.78L3.72 10.39L3.28 9.33L1.50 9.16L1.50 6.84L3.28 6.67L3.72 5.61L2.59 4.22L4.22 2.59L5.61 3.72L6.67 3.28L6.84 1.50L9.16 1.50L9.33 3.28L10.39 3.72L11.78 2.59L13.41 4.22L12.28 5.61Z" fill="none" stroke="#adadad" stroke-width="1" stroke-linejoin="round" stroke-dasharray="2.2 .5"/><circle cx="8" cy="8" r="2.4" fill="none" stroke="#d2d2d2" stroke-width="1"/><text x="6.4" y="14.4" font-family="Liberation Serif,serif" font-weight="bold" font-style="italic" font-size="12" fill="#000">f</text><path d="M9.6 9.2H14.6" stroke="#000" stroke-width="1"/><text x="12" y="17" font-family="Liberation Serif,serif" font-weight="bold" font-style="italic" font-size="10.5" fill="#000">x</text><circle cx="16.4" cy="12.4" r=".6" fill="#111"/></svg>
<svg style="left:1486px;top:700px" width="15" height="15"><rect x=".6" y=".5" width="12.7" height="13" rx="1.2" fill="#fff" stroke="#94979c" stroke-width="1"/><path d="M9.4 .6V13.4" stroke="#94979c" stroke-width="1"/><rect x="9.9" y="4.8" width="3" height="4.4" fill="#c8cbcf"/><path d="M9.6 4.6H13.2M9.6 9.4H13.2" stroke="#94979c" stroke-width=".7"/><circle cx="11.5" cy="2.7" r=".65" fill="#555"/><circle cx="11.5" cy="11.4" r=".65" fill="#555"/><path d="M2.4 3L3.4 2.2V6M5.8 4.6H7.8M2.2 8.5C2.8 7.5 4.4 7.8 4 9.1L2.2 11.3H4.6M5.8 9.6H7.8" fill="none" stroke="#6c6f74" stroke-width="1"/></svg>
<svg style="left:1509px;top:699px" width="17" height="15"><path d="M14.53 6.17L16.60 6.31L16.60 8.69L14.53 8.83L14.00 10.11L15.36 11.68L13.68 13.36L12.11 12.00L10.83 12.53L10.69 14.60L8.31 14.60L8.17 12.53L6.89 12.00L5.32 13.36L3.64 11.68L5.00 10.11L4.47 8.83L2.40 8.69L2.40 6.31L4.47 6.17L5.00 4.89L3.64 3.32L5.32 1.64L6.89 3.00L8.17 2.47L8.31 0.40L10.69 0.40L10.83 2.47L12.11 3.00L13.68 1.64L15.36 3.32L14.00 4.89Z" fill="none" stroke="#86a5bf" stroke-width="1.1"/></svg>
<svg style="left:1282px;top:726px" width="18" height="18"><circle cx="9" cy="9" r="7.5" fill="url(#gup)" stroke="#3f3fa0" stroke-width="1"/><path d="M9 4.3L13.3 8.9H11.1V13H6.9V8.9H4.7Z" fill="#fff" stroke="#3a3a9c" stroke-width="1.8" stroke-linejoin="round" paint-order="stroke"/></svg>
<svg style="left:1460px;top:726px" width="20" height="20"><path d="M12.72 6.67L14.50 6.84L14.50 9.16L12.72 9.33L12.28 10.39L13.41 11.78L11.78 13.41L10.39 12.28L9.33 12.72L9.16 14.50L6.84 14.50L6.67 12.72L5.61 12.28L4.22 13.41L2.59 11.78L3.72 10.39L3.28 9.33L1.50 9.16L1.50 6.84L3.28 6.67L3.72 5.61L2.59 4.22L4.22 2.59L5.61 3.72L6.67 3.28L6.84 1.50L9.16 1.50L9.33 3.28L10.39 3.72L11.78 2.59L13.41 4.22L12.28 5.61Z" fill="none" stroke="#adadad" stroke-width="1" stroke-linejoin="round" stroke-dasharray="2.2 .5"/><circle cx="8" cy="8" r="2.4" fill="none" stroke="#d2d2d2" stroke-width="1"/><text x="6.4" y="14.4" font-family="Liberation Serif,serif" font-weight="bold" font-style="italic" font-size="12" fill="#000">f</text><path d="M9.6 9.2H14.6" stroke="#000" stroke-width="1"/><text x="12" y="17" font-family="Liberation Serif,serif" font-weight="bold" font-style="italic" font-size="10.5" fill="#000">x</text><circle cx="16.4" cy="12.4" r=".6" fill="#111"/></svg>
<svg style="left:1486px;top:728px" width="15" height="15"><rect x=".6" y=".5" width="12.7" height="13" rx="1.2" fill="#fff" stroke="#94979c" stroke-width="1"/><path d="M9.4 .6V13.4" stroke="#94979c" stroke-width="1"/><rect x="9.9" y="4.8" width="3" height="4.4" fill="#c8cbcf"/><path d="M9.6 4.6H13.2M9.6 9.4H13.2" stroke="#94979c" stroke-width=".7"/><circle cx="11.5" cy="2.7" r=".65" fill="#555"/><circle cx="11.5" cy="11.4" r=".65" fill="#555"/><path d="M2.4 3L3.4 2.2V6M5.8 4.6H7.8M2.2 8.5C2.8 7.5 4.4 7.8 4 9.1L2.2 11.3H4.6M5.8 9.6H7.8" fill="none" stroke="#6c6f74" stroke-width="1"/></svg>
<svg style="left:1509px;top:727px" width="17" height="15"><path d="M14.53 6.17L16.60 6.31L16.60 8.69L14.53 8.83L14.00 10.11L15.36 11.68L13.68 13.36L12.11 12.00L10.83 12.53L10.69 14.60L8.31 14.60L8.17 12.53L6.89 12.00L5.32 13.36L3.64 11.68L5.00 10.11L4.47 8.83L2.40 8.69L2.40 6.31L4.47 6.17L5.00 4.89L3.64 3.32L5.32 1.64L6.89 3.00L8.17 2.47L8.31 0.40L10.69 0.40L10.83 2.47L12.11 3.00L13.68 1.64L15.36 3.32L14.00 4.89Z" fill="none" stroke="#86a5bf" stroke-width="1.1"/></svg>
<svg style="left:1282px;top:811px" width="18" height="18"><circle cx="9" cy="9" r="7.5" fill="#fff" stroke="#d8d9dd" stroke-width="1.2"/><circle cx="9" cy="9" r="5" fill="none" stroke="#efeff0" stroke-width="1.8"/><path d="M3.4 14.4L8.4 9.5" stroke="#b0b0b0" stroke-width="1.1"/><g transform="translate(10.2 8) scale(.88) translate(-10 -8)"><path d="M10.4 3.8L14.2 7.5L13.5 8.1L12.4 7.9L10.9 9.6L11.2 11.5L10.5 12.1L5.8 7.5L6.5 6.8L8.4 7.1L10 5.5L9.8 4.4Z" fill="#f40c0c"/><path d="M7 7.2L8.8 7.4L10.4 5.7" stroke="#ff7d7d" stroke-width=".7" fill="none"/></g></svg>
<svg style="left:1282px;top:839px" width="18" height="18"><circle cx="9" cy="9" r="7.5" fill="#fff" stroke="#d8d9dd" stroke-width="1.2"/><circle cx="9" cy="9" r="5" fill="none" stroke="#efeff0" stroke-width="1.8"/><path d="M3.4 14.4L8.4 9.5" stroke="#b0b0b0" stroke-width="1.1"/><g transform="translate(10.2 8) scale(.88) translate(-10 -8)"><path d="M10.4 3.8L14.2 7.5L13.5 8.1L12.4 7.9L10.9 9.6L11.2 11.5L10.5 12.1L5.8 7.5L6.5 6.8L8.4 7.1L10 5.5L9.8 4.4Z" fill="#f40c0c"/><path d="M7 7.2L8.8 7.4L10.4 5.7" stroke="#ff7d7d" stroke-width=".7" fill="none"/></g></svg>
<div class="a" style="left:103px;top:462px;width:2px;height:300px;background:#ffa50a;"></div>
<div class="a" style="left:111px;top:455px;width:22px;height:2px;background:#ffa50a;"></div>
<div class="a" style="left:103px;top:760px;width:30px;height:2px;background:#ffa50a;"></div>
<svg style="left:94px;top:446px" width="19" height="19"><circle cx="9" cy="9" r="7.4" fill="url(#glo)" stroke="url(#gls)" stroke-width="1.2"/><path d="M12 11L17.2 16.6H12Z" fill="#1f3b5e"/></svg>
<div class="a" style="left:439px;top:209px;width:214px;height:40px;background:#767676;"></div>
<div class="a" style="left:440px;top:210px;width:212px;height:38px;background:#f1f2f7;"></div>
<span class="t tab" style="left:14.1px;top:-4.3px;transform:scaleX(0.9491)">Basic View</span>
<span class="t tab" style="left:100.5px;top:-4.3px;letter-spacing:-0.23px">Expert View</span>
<span class="t hd sno" style="left:4.1px;top:22.7px;letter-spacing:-0.27px">S.No</span>
<span class="t hd" style="left:48.5px;top:22.7px;letter-spacing:-0.29px">Enable</span>
<span class="t hd" style="left:128.7px;top:22.7px;letter-spacing:0.08px">Description</span>
<span class="t hd" style="left:765.5px;top:22.7px;letter-spacing:0.45px">Name</span>
<span class="t hd" style="left:1133.5px;top:22.7px;letter-spacing:-0.03px">Type &amp; Length</span>
<span class="t hd" style="left:1266.6px;top:22.7px;letter-spacing:0.5px">Mapping</span>
<span class="t hd" style="left:1427.3px;top:22.7px;transform:scaleX(0.9522)">Value</span>
<span class="t no" style="left:22.6px;top:48.6px">3</span>
<span class="t gb" style="left:155.3px;top:48.6px;letter-spacing:0.14px">SAPMV13A - 0100</span>
<span class="t gt" style="left:281.3px;top:48.6px">-</span>
<span class="t gt" style="left:294.8px;top:48.6px;letter-spacing:0.02px">Condition Maintenance Entry via Condition Type</span>
<span class="t no" style="left:22.6px;top:76.5px">4</span>
<span class="t ds" style="left:129px;top:76.5px;letter-spacing:-0.27px">Cursor position on the screen</span>
<span class="t nm" style="left:765.6px;top:76.5px;transform:scaleX(0.8806)">BDC_CURSOR</span>
<span class="t ty" style="left:1149.4px;top:76.5px;letter-spacing:0.15px">{cursor}</span>
<span class="t nm" style="left:1360.6px;top:76.5px;transform:scaleX(0.9204)">RV13A-KSCHL</span>
<span class="t no" style="left:22.5px;top:104.5px">5</span>
<span class="t ds" style="left:129px;top:104.5px;letter-spacing:-0.19px">OK code for this screen</span>
<span class="t nm" style="left:765.6px;top:104.5px;transform:scaleX(0.8875)">BDC_OKCODE</span>
<span class="t ty" style="left:1144.5px;top:104.5px;letter-spacing:0.13px">{ok code}</span>
<span class="t nm" style="left:1360.8px;top:104.5px;letter-spacing:0.75px">/00</span>
<span class="t no" style="left:22.6px;top:132.5px">6</span>
<span class="t ds" style="left:129px;top:132.5px;transform:scaleX(0.9523)">Condition Type</span>
<span class="t nm" style="left:765.6px;top:132.5px;transform:scaleX(0.9204)">RV13A-KSCHL</span>
<span class="t ty" style="left:1141.0px;top:132.5px;transform:scaleX(0.8904)">STRING</span>
<span class="t ty" style="left:1192.6px;top:132.5px">4</span>
<span class="t nm" style="left:1360.6px;top:132.5px">B</span>
<span class="t no" style="left:22.6px;top:161.6px">7</span>
<span class="t gb" style="left:155.3px;top:161.6px;letter-spacing:0.08px">SAPMV13A - 1950</span>
<span class="t gt" style="left:281.3px;top:161.6px">-</span>
<span class="t no" style="left:22.6px;top:189.5px">8</span>
<span class="t ds" style="left:129px;top:189.5px;letter-spacing:-0.27px">Cursor position on the screen</span>
<span class="t nm" style="left:765.6px;top:189.5px;transform:scaleX(0.8806)">BDC_CURSOR</span>
<span class="t ty" style="left:1149.4px;top:189.5px;letter-spacing:0.15px">{cursor}</span>
<span class="t nm" style="left:1360.6px;top:189.5px;transform:scaleX(0.9269)">RV13A-DATBI(01)</span>
<span class="t no" style="left:22.6px;top:217.5px">9</span>
<span class="t ds" style="left:129px;top:217.5px;letter-spacing:-0.19px">OK code for this screen</span>
<span class="t nm" style="left:765.6px;top:217.5px;transform:scaleX(0.8875)">BDC_OKCODE</span>
<span class="t ty" style="left:1144.5px;top:217.5px;letter-spacing:0.13px">{ok code}</span>
<span class="t nm" style="left:1361.0px;top:217.5px;transform:scaleX(0.9599)">=BNEW</span>
<span class="t no" style="left:20.9px;top:245.5px;transform:scaleX(0.932)">10</span>
<span class="t ds" style="left:129px;top:245.5px;letter-spacing:0.09px">Material Number</span>
<span class="t nm" style="left:765.6px;top:245.5px;transform:scaleX(0.9593)">KOMG-MATNR(01)</span>
<span class="t ty" style="left:1138.0px;top:245.5px;transform:scaleX(0.8904)">STRING</span>
<span class="t ty" style="left:1189.9px;top:245.5px;transform:scaleX(0.9373)">18</span>
<span class="t nm" style="left:1361.0px;top:245.5px">C</span>
<span class="t no" style="left:20.9px;top:273.5px;transform:scaleX(0.9332)">11</span>
<span class="t ds" style="left:129px;top:273.5px;letter-spacing:-0.14px">Rate (condition amount or percentage) where no scale exists</span>
<span class="t nm" style="left:765.5px;top:273.5px;transform:scaleX(0.8999)">KONP-KBETR(01)</span>
<span class="t ty" style="left:1132.8px;top:273.5px;transform:scaleX(0.9385)">DECIMAL</span>
<span class="t ty" style="left:1195.0px;top:273.5px;transform:scaleX(0.924)">16</span>
<span class="t nm" style="left:1360.6px;top:273.5px">D</span>
<span class="t no" style="left:20.9px;top:301.5px;transform:scaleX(0.9401)">12</span>
<span class="t ds" style="left:129px;top:301.5px;letter-spacing:-0.06px">Rate unit (currency or percentage)</span>
<span class="t nm" style="left:765.6px;top:301.5px;transform:scaleX(0.9546)">KONP-KONWA(01)</span>
<span class="t ty" style="left:1141.0px;top:301.5px;transform:scaleX(0.8904)">STRING</span>
<span class="t ty" style="left:1193.0px;top:301.5px">5</span>
<span class="t nm" style="left:1360.6px;top:301.5px">E</span>
<span class="t no" style="left:20.9px;top:329.5px;transform:scaleX(0.9394)">13</span>
<span class="t ds" style="left:129px;top:329.5px;letter-spacing:-0.26px">Condition pricing unit</span>
<span class="t nm" style="left:765.6px;top:329.5px;transform:scaleX(0.9267)">KONP-KPEIN(01)</span>
<span class="t ty" style="left:1136.9px;top:329.5px;transform:scaleX(0.9365)">DECIMAL</span>
<span class="t ty" style="left:1199.3px;top:329.5px">5</span>
<span class="t nm" style="left:1360.6px;top:329.5px">F</span>
<span class="t no" style="left:20.9px;top:357.5px;transform:scaleX(0.925)">14</span>
<span class="t ds" style="left:129px;top:357.5px;letter-spacing:-0.21px">Condition unit</span>
<span class="t nm" style="left:765.6px;top:357.5px;transform:scaleX(0.9492)">KONP-KMEIN(01)</span>
<span class="t ty" style="left:1141.0px;top:357.5px;transform:scaleX(0.8904)">STRING</span>
<span class="t ty" style="left:1193.0px;top:357.5px">3</span>
<span class="t nm" style="left:1361.0px;top:357.5px">G</span>
<span class="t no" style="left:20.9px;top:385.5px;transform:scaleX(0.9388)">15</span>
<span class="t ds" style="left:129px;top:385.5px;letter-spacing:-0.1px">Validity start date of the condition record</span>
<span class="t nm" style="left:765.6px;top:385.5px;transform:scaleX(0.9341)">RV13A-DATAB(01)</span>
<span class="t ty" style="left:1144.9px;top:385.5px;transform:scaleX(0.8753)">DATE</span>
<span class="t ty" style="left:1183.9px;top:385.5px;transform:scaleX(0.9806)">10</span>
<span class="t nm" style="left:1360.6px;top:385.5px">H</span>
<span class="t no" style="left:20.9px;top:413.5px;transform:scaleX(0.941)">16</span>
<span class="t ds" style="left:129px;top:413.5px;letter-spacing:-0.1px">Validity end date of the condition record</span>
<span class="t nm" style="left:765.6px;top:413.5px;transform:scaleX(0.9269)">RV13A-DATBI(01)</span>
<span class="t ty" style="left:1144.9px;top:413.5px;transform:scaleX(0.8753)">DATE</span>
<span class="t ty" style="left:1183.9px;top:413.5px;transform:scaleX(0.9806)">10</span>
<span class="t nm" style="left:1360.5px;top:413.5px">I</span>
<span class="t no" style="left:20.9px;top:441.5px;transform:scaleX(0.9401)">17</span>
<span class="t lp" style="left:137.0px;top:442.6px;letter-spacing:0.15px">Loop While (Column A = "D")</span>
<span class="t no" style="left:20.9px;top:470.6px;transform:scaleX(0.9373)">18</span>
<span class="t gb" style="left:155.3px;top:470.6px;letter-spacing:0.08px">SAPMV13A - 1950</span>
<span class="t gt" style="left:281.3px;top:470.6px">-</span>
<span class="t no" style="left:20.9px;top:498.5px;transform:scaleX(0.9407)">19</span>
<span class="t ds" style="left:129px;top:498.5px;letter-spacing:-0.27px">Cursor position on the screen</span>
<span class="t nm" style="left:765.6px;top:498.5px;transform:scaleX(0.8806)">BDC_CURSOR</span>
<span class="t ty" style="left:1149.4px;top:498.5px;letter-spacing:0.15px">{cursor}</span>
<span class="t nm" style="left:1360.6px;top:498.5px;transform:scaleX(0.9269)">RV13A-DATBI(01)</span>
<span class="t no" style="left:20.3px;top:526.5px;letter-spacing:-0.18px">20</span>
<span class="t ds" style="left:129px;top:526.5px;letter-spacing:-0.19px">OK code for this screen</span>
<span class="t nm" style="left:765.6px;top:526.5px;transform:scaleX(0.8875)">BDC_OKCODE</span>
<span class="t ty" style="left:1144.5px;top:526.5px;letter-spacing:0.13px">{ok code}</span>
<span class="t nm" style="left:1361.0px;top:526.5px;transform:scaleX(0.9599)">=BNEW</span>
<span class="t no" style="left:20.3px;top:554.5px;transform:scaleX(0.9101)">21</span>
<span class="t ds" style="left:129px;top:554.5px;letter-spacing:0.09px">Material Number</span>
<span class="t nm" style="left:765.6px;top:554.5px;transform:scaleX(0.9593)">KOMG-MATNR(01)</span>
<span class="t ty" style="left:1138.0px;top:554.5px;transform:scaleX(0.8904)">STRING</span>
<span class="t ty" style="left:1189.9px;top:554.5px;transform:scaleX(0.9373)">18</span>
<span class="t nm" style="left:1361.0px;top:554.5px">C</span>
<span class="t no" style="left:20.3px;top:582.5px;letter-spacing:-0.08px">22</span>
<span class="t ds" style="left:129px;top:582.5px;letter-spacing:-0.14px">Rate (condition amount or percentage) where no scale exists</span>
<span class="t nm" style="left:765.5px;top:582.5px;transform:scaleX(0.8999)">KONP-KBETR(01)</span>
<span class="t ty" style="left:1132.8px;top:582.5px;transform:scaleX(0.9385)">DECIMAL</span>
<span class="t ty" style="left:1195.0px;top:582.5px;transform:scaleX(0.924)">16</span>
<span class="t nm" style="left:1360.6px;top:582.5px">D</span>
<span class="t no" style="left:20.3px;top:610.5px;letter-spacing:-0.09px">23</span>
<span class="t ds" style="left:129px;top:610.5px;letter-spacing:-0.06px">Rate unit (currency or percentage)</span>
<span class="t nm" style="left:765.6px;top:610.5px;transform:scaleX(0.9546)">KONP-KONWA(01)</span>
<span class="t ty" style="left:1141.0px;top:610.5px;transform:scaleX(0.8904)">STRING</span>
<span class="t ty" style="left:1193.0px;top:610.5px">5</span>
<span class="t nm" style="left:1360.6px;top:610.5px">E</span>
<span class="t no" style="left:20.3px;top:638.5px;letter-spacing:-0.27px">24</span>
<span class="t ds" style="left:129px;top:638.5px;letter-spacing:-0.26px">Condition pricing unit</span>
<span class="t nm" style="left:765.6px;top:638.5px;transform:scaleX(0.9267)">KONP-KPEIN(01)</span>
<span class="t ty" style="left:1136.9px;top:638.5px;transform:scaleX(0.9365)">DECIMAL</span>
<span class="t ty" style="left:1199.3px;top:638.5px">5</span>
<span class="t nm" style="left:1360.6px;top:638.5px">F</span>
<span class="t no" style="left:20.3px;top:666.5px;letter-spacing:-0.1px">25</span>
<span class="t ds" style="left:129px;top:666.5px;letter-spacing:-0.21px">Condition unit</span>
<span class="t nm" style="left:765.6px;top:666.5px;transform:scaleX(0.9492)">KONP-KMEIN(01)</span>
<span class="t ty" style="left:1141.0px;top:666.5px;transform:scaleX(0.8904)">STRING</span>
<span class="t ty" style="left:1193.0px;top:666.5px">3</span>
<span class="t nm" style="left:1361.0px;top:666.5px">G</span>
<span class="t no" style="left:20.3px;top:694.5px;letter-spacing:-0.07px">26</span>
<span class="t ds" style="left:129px;top:694.5px;letter-spacing:-0.1px">Validity start date of the condition record</span>
<span class="t nm" style="left:765.6px;top:694.5px;transform:scaleX(0.9341)">RV13A-DATAB(01)</span>
<span class="t ty" style="left:1144.9px;top:694.5px;transform:scaleX(0.8753)">DATE</span>
<span class="t ty" style="left:1183.9px;top:694.5px;transform:scaleX(0.9806)">10</span>
<span class="t nm" style="left:1360.6px;top:694.5px">H</span>
<span class="t no" style="left:20.3px;top:722.5px;letter-spacing:-0.08px">27</span>
<span class="t ds" style="left:129px;top:722.5px;letter-spacing:-0.1px">Validity end date of the condition record</span>
<span class="t nm" style="left:765.6px;top:722.5px;transform:scaleX(0.9269)">RV13A-DATBI(01)</span>
<span class="t ty" style="left:1144.9px;top:722.5px;transform:scaleX(0.8753)">DATE</span>
<span class="t ty" style="left:1183.9px;top:722.5px;transform:scaleX(0.9806)">10</span>
<span class="t nm" style="left:1360.5px;top:722.5px">I</span>
<span class="t no" style="left:20.3px;top:750.5px;letter-spacing:-0.12px">28</span>
<span class="t lp" style="left:139.8px;top:749.6px;letter-spacing:-0.02px">End loop</span>
<span class="t no" style="left:20.3px;top:779.6px;letter-spacing:-0.07px">29</span>
<span class="t gb" style="left:155.3px;top:779.6px;letter-spacing:0.08px">SAPMV13A - 1950</span>
<span class="t gt" style="left:281.3px;top:779.6px">-</span>
<span class="t no" style="left:20.2px;top:807.5px;letter-spacing:-0.12px">30</span>
<span class="t ds" style="left:129px;top:807.5px;letter-spacing:-0.27px">Cursor position on the screen</span>
<span class="t nm" style="left:765.6px;top:807.5px;transform:scaleX(0.8806)">BDC_CURSOR</span>
<span class="t ty" style="left:1149.4px;top:807.5px;letter-spacing:0.15px">{cursor}</span>
<span class="t nm" style="left:1360.6px;top:807.5px;transform:scaleX(0.9269)">RV13A-DATBI(01)</span>
<span class="t no" style="left:20.3px;top:835.5px;transform:scaleX(0.9148)">31</span>
<span class="t ds" style="left:129px;top:835.5px;letter-spacing:-0.19px">OK code for this screen</span>
<span class="t nm" style="left:765.6px;top:835.5px;transform:scaleX(0.8875)">BDC_OKCODE</span>
<span class="t ty" style="left:1144.5px;top:835.5px;letter-spacing:0.13px">{ok code}</span>
<span class="t nm" style="left:1361.0px;top:835.5px;transform:scaleX(0.9627)">=SICH</span>
<span class="t tt" style="left:445.6px;top:209.9px;letter-spacing:0.1px">Double-click to change the field</span>
<span class="t tt" style="left:446.1px;top:224.7px;letter-spacing:0.13px">description</span>
</div>
</body></html>
